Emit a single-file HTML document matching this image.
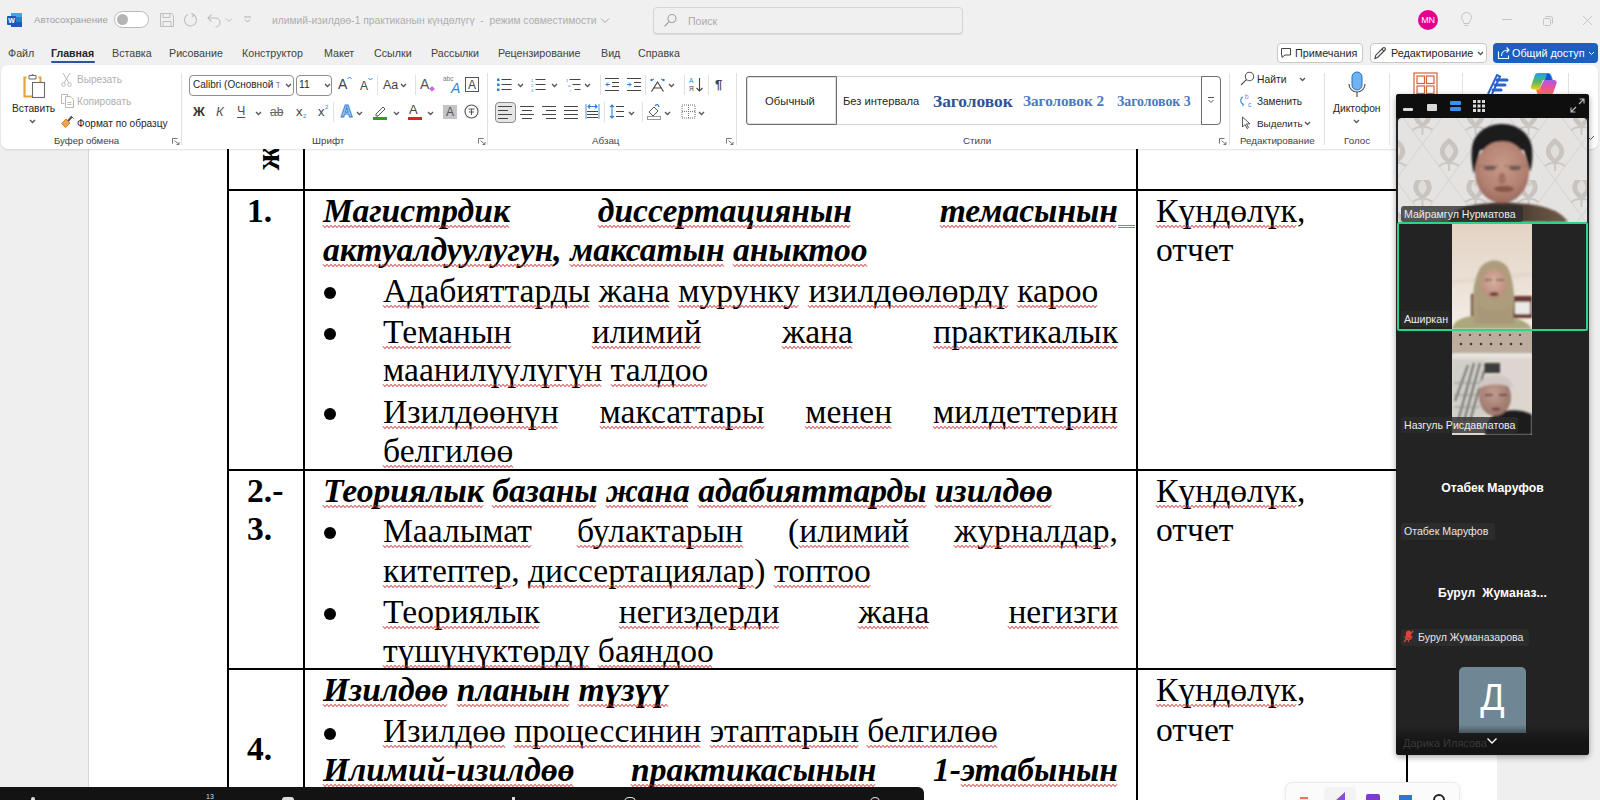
<!DOCTYPE html>
<html><head><meta charset="utf-8">
<style>
*{box-sizing:border-box;margin:0;padding:0}
html,body{width:1600px;height:800px;overflow:hidden;background:#f0f0f0;font-family:"Liberation Sans",sans-serif;position:relative}
.a{position:absolute}
.ui{font-family:"Liberation Sans",sans-serif;font-size:11px;color:#262626;white-space:nowrap}
.gr{color:#a8a8a8}
.tab{position:absolute;top:47px;font-size:10.5px;color:#424242;white-space:nowrap}
.sep{position:absolute;width:1px;background:#e1e1e1}
.glab{position:absolute;top:135px;font-size:10px;color:#424242;white-space:nowrap}
/* document */
.doc{font-family:"Liberation Serif",serif;font-size:33.6px;color:#000;white-space:nowrap;position:absolute;line-height:40px}
.bi{font-weight:bold;font-style:italic}
.j{text-align:justify;text-align-last:justify}
.w{}
.hl{position:absolute;background:#000;height:2px}
.vl{position:absolute;background:#000;width:2px}
.bul{position:absolute;width:12px;height:12px;border-radius:50%;background:#000}
</style></head><body>

<!-- ===== Title bar ===== -->
<div class="a" id="titlebar" style="left:0;top:0;width:1600px;height:40px;background:#f0f0f0"></div>


<!-- Word icon -->
<svg class="a" style="left:7px;top:12px" width="16" height="16" viewBox="0 0 16 16">
 <rect x="4" y="1" width="11" height="14" rx="1.5" fill="#2b6fd6"/>
 <rect x="4" y="1" width="11" height="4" fill="#41a5ee"/>
 <rect x="4" y="5" width="11" height="5" fill="#2b7cd3"/>
 <rect x="4" y="10" width="11" height="5" fill="#185abd"/>
 <rect x="0" y="4" width="9" height="9" rx="1" fill="#1e56b6"/>
 <text x="4.5" y="11.3" font-family="Liberation Sans" font-weight="bold" font-size="7" fill="#fff" text-anchor="middle">W</text>
</svg>
<div class="a ui" style="left:34px;top:14px;font-size:9.7px;color:#a0a0a0">Автосохранение</div>
<div class="a" style="left:114px;top:11px;width:35px;height:17px;border:1px solid #b9b9b9;border-radius:9px;background:#fff"></div>
<div class="a" style="left:117px;top:14px;width:11px;height:11px;border-radius:50%;background:#b5b5b5"></div>
<!-- save -->
<svg class="a" style="left:159px;top:12px" width="16" height="16" viewBox="0 0 16 16" fill="none" stroke="#bdbdbd" stroke-width="1">
 <path d="M1.5 1.5h11l2 2v11h-13z"/><path d="M4 1.5v4h7v-4"/><path d="M4 14.5v-5h8v5"/>
</svg>
<!-- redo circle -->
<svg class="a" style="left:183px;top:12px" width="16" height="16" viewBox="0 0 16 16" fill="none" stroke="#bdbdbd" stroke-width="1.1">
 <path d="M10.5 2.8A6 6 0 1 1 5 2.5"/><path d="M8.5 1.2 10.8 2.9 9 5"/>
</svg>
<!-- undo -->
<svg class="a" style="left:207px;top:12px" width="16" height="17" viewBox="0 0 16 17" fill="none" stroke="#bdbdbd" stroke-width="1.1">
 <path d="M1.5 6h7a4.5 4.5 0 0 1 0 9"/><path d="M4.5 2.5 1 6l3.5 3.5" transform="translate(0,0)"/>
</svg>
<svg class="a" style="left:225px;top:17px" width="8" height="6" viewBox="0 0 8 6" fill="none" stroke="#bdbdbd"><path d="M1 1.5 4 4.5 7 1.5"/></svg>
<svg class="a" style="left:243px;top:15px" width="9" height="9" viewBox="0 0 9 9" fill="none" stroke="#b0b0b0"><path d="M1 2h7M2 4.5l2.5 2.5 2.5-2.5"/></svg>
<div class="a ui" style="left:272px;top:15px;font-size:10.3px;color:#aeaeae">илимий-изилдөө-1 практиканын күндөлүгү &nbsp;- &nbsp;режим совместимости</div>
<svg class="a" style="left:600px;top:17px" width="10" height="7" viewBox="0 0 10 7" fill="none" stroke="#a6a6a6"><path d="M1 1.5 5 5.5 9 1.5"/></svg>
<!-- search -->
<div class="a" style="left:653px;top:7px;width:310px;height:27px;border:1px solid #d5d5d5;border-radius:4px;background:#f0f0f0;box-shadow:0 1px 0 #dcdcdc"></div>
<svg class="a" style="left:663px;top:13px" width="15" height="15" viewBox="0 0 15 15" fill="none" stroke="#a0a0a0" stroke-width="1.1"><circle cx="9" cy="5.5" r="4"/><path d="M6.2 8.5 1.5 13.3"/></svg>
<div class="a ui" style="left:688px;top:15px;font-size:10.5px;color:#acacac">Поиск</div>
<!-- avatar -->
<div class="a" style="left:1418px;top:10px;width:20px;height:20px;border-radius:50%;background:#e3008c;color:#fff;font-size:9px;line-height:20px;text-align:center;letter-spacing:-.3px">MN</div>
<svg class="a" style="left:1460px;top:12px" width="13" height="16" viewBox="0 0 13 16" fill="none" stroke="#c4c4c4" stroke-width="1"><path d="M4 11.5C4 9 1.5 8 1.5 5.5a5 5 0 0 1 10 0C11.5 8 9 9 9 11.5z"/><path d="M4.5 13.5h4"/></svg>
<div class="a" style="left:1502px;top:19px;width:10px;height:1px;background:#c4c4c4"></div>
<svg class="a" style="left:1542px;top:15px" width="11" height="11" viewBox="0 0 11 11" fill="none" stroke="#c4c4c4"><rect x="1.5" y="3.5" width="7" height="7" rx="1"/><path d="M3.5 1.5h5a2 2 0 0 1 2 2v5"/></svg>
<svg class="a" style="left:1582px;top:15px" width="11" height="11" viewBox="0 0 11 11" fill="none" stroke="#c4c4c4"><path d="M1 1l9 9M10 1 1 10"/></svg>

<!-- tabs -->
<div class="tab" style="left:8px;font-size:10.7px">Файл</div>
<div class="tab" style="left:51px;font-weight:bold;color:#262626;font-size:10.6px">Главная</div>
<div class="a" style="left:51px;top:61px;width:44px;height:2px;border-radius:1px;background:#2f5597"></div>
<div class="tab" style="left:112px;font-size:10.7px">Вставка</div>
<div class="tab" style="left:169px;font-size:10.7px">Рисование</div>
<div class="tab" style="left:242px;font-size:10.7px">Конструктор</div>
<div class="tab" style="left:324px;font-size:10.7px">Макет</div>
<div class="tab" style="left:374px;font-size:10.7px">Ссылки</div>
<div class="tab" style="left:431px;font-size:10.7px">Рассылки</div>
<div class="tab" style="left:498px;font-size:10.7px">Рецензирование</div>
<div class="tab" style="left:601px;font-size:10.7px">Вид</div>
<div class="tab" style="left:638px;font-size:10.7px">Справка</div>

<!-- right buttons -->
<div class="a" style="left:1277px;top:43px;width:86px;height:20px;border:1px solid #c8c8c8;border-radius:4px;background:#fff"></div>
<svg class="a" style="left:1280px;top:47px" width="12" height="12" viewBox="0 0 12 12" fill="none" stroke="#444" stroke-width="1"><path d="M1.5 1.5h9v6.5h-5.5l-3 2.5v-2.5h-.5z"/></svg>
<div class="a ui" style="left:1295px;top:47px;font-size:10.8px;color:#262626">Примечания</div>
<div class="a" style="left:1370px;top:43px;width:117px;height:20px;border:1px solid #c8c8c8;border-radius:4px;background:#fff"></div>
<svg class="a" style="left:1373px;top:46px" width="14" height="14" viewBox="0 0 14 14" fill="none" stroke="#444" stroke-width="1.1"><path d="M2 12.5l.8-3.3L10 2a1.4 1.4 0 0 1 2 2L4.8 11.2z"/><path d="M8.8 3.2l2 2"/></svg>
<div class="a ui" style="left:1391px;top:47px;font-size:10.8px;color:#262626">Редактирование</div>
<svg class="a" style="left:1477px;top:51px" width="7" height="5" viewBox="0 0 7 5" fill="none" stroke="#555" stroke-width="1.3"><path d="M1 1l2.5 2.5L6 1"/></svg>
<div class="a" style="left:1493px;top:43px;width:105px;height:20px;border-radius:4px;background:#1b5fc1"></div>
<svg class="a" style="left:1497px;top:46px" width="14" height="14" viewBox="0 0 14 14" fill="none" stroke="#fff" stroke-width="1.1"><path d="M1.5 5.5v7h10v-3"/><path d="M4.5 10c0-4 3-6 7-6M9.5 1.5 12 4 9.5 6.5"/></svg>
<div class="a ui" style="left:1512px;top:47px;font-size:10.8px;color:#fff">Общий доступ</div>
<svg class="a" style="left:1588px;top:51px" width="7" height="5" viewBox="0 0 7 5" fill="none" stroke="#fff"><path d="M1 1l2.5 2.5L6 1"/></svg>

<!-- ===== Document canvas ===== -->
<div class="a" style="left:0;top:149px;width:1600px;height:651px;background:#efefef"></div>
<div class="a" style="left:88px;top:140px;width:1409px;height:660px;background:#fff;border-left:1px solid #d6d6d6"></div>


<!-- ===== Table ===== -->
<div class="vl" style="left:227px;top:149px;height:651px"></div>
<div class="vl" style="left:303px;top:149px;height:651px"></div>
<div class="vl" style="left:1136px;top:149px;height:651px"></div>
<div class="vl" style="left:1406px;top:149px;height:651px"></div>
<div class="hl" style="left:227px;top:189px;width:1181px"></div>
<div class="hl" style="left:227px;top:469px;width:1181px"></div>
<div class="hl" style="left:227px;top:668px;width:1181px"></div>

<div class="doc" style="left:253px;top:143px;font-weight:bold;transform:rotate(-90deg);line-height:30px;width:30px;height:30px;text-align:center">ж</div>

<!-- row 1 -->
<div class="a" style="left:1118px;top:225px;width:17px;height:3px;border-top:1px solid #5b8fd8;border-bottom:1px solid #5b8fd8"></div>
<div class="doc" style="left:247px;top:191px;font-weight:bold">1.</div>
<div class="doc bi j" style="left:323px;top:191px;width:795px"><span class="w">Магистрдик</span> <span class="w">диссертациянын</span> <span class="w">темасынын</span></div>
<div class="doc bi" style="left:323px;top:230px"><span class="w">актуалдуулугун</span>, <span class="w">максатын</span> <span class="w">аныктоо</span></div>
<div class="bul" style="left:324px;top:287px"></div>
<div class="doc" style="left:383px;top:271px"><span class="w">Адабияттарды</span> <span class="w">жана</span> <span class="w">мурунку</span> <span class="w">изилдөөлөрдү</span> <span class="w">кароо</span></div>
<div class="bul" style="left:324px;top:328px"></div>
<div class="doc j" style="left:383px;top:312px;width:735px"><span class="w">Теманын</span> <span class="w">илимий</span> <span class="w">жана</span> <span class="w">практикалык</span></div>
<div class="doc" style="left:383px;top:350px"><span class="w">маанилүүлүгүн</span> <span class="w">талдоо</span></div>
<div class="bul" style="left:324px;top:408px"></div>
<div class="doc j" style="left:383px;top:392px;width:735px"><span class="w">Изилдөөнүн</span> <span class="w">максаттары</span> <span class="w">менен</span> <span class="w">милдеттерин</span></div>
<div class="doc" style="left:383px;top:431px"><span class="w">белгилөө</span></div>
<div class="doc" style="left:1156px;top:191px"><span class="w">Күндөлүк</span>,</div>
<div class="doc" style="left:1156px;top:230px">отчет</div>

<!-- row 2 -->
<div class="doc" style="left:247px;top:471px;font-weight:bold">2.-</div>
<div class="doc" style="left:247px;top:509px;font-weight:bold">3.</div>
<div class="doc bi" style="left:323px;top:471px"><span class="w">Теориялык</span> <span class="w">базаны</span> <span class="w">жана</span> <span class="w">адабияттарды</span> <span class="w">изилдөө</span></div>
<div class="bul" style="left:324px;top:527px"></div>
<div class="doc j" style="left:383px;top:511px;width:735px"><span class="w">Маалымат</span> <span class="w">булактарын</span> (<span class="w">илимий</span> <span class="w">журналдар</span>,</div>
<div class="doc" style="left:383px;top:551px"><span class="w">китептер</span>, <span class="w">диссертациялар</span>) <span class="w">топтоо</span></div>
<div class="bul" style="left:324px;top:608px"></div>
<div class="doc j" style="left:383px;top:592px;width:735px"><span class="w">Теориялык</span> <span class="w">негиздерди</span> <span class="w">жана</span> <span class="w">негизги</span></div>
<div class="doc" style="left:383px;top:631px"><span class="w">түшүнүктөрдү</span> <span class="w">баяндоо</span></div>
<div class="doc" style="left:1156px;top:471px"><span class="w">Күндөлүк</span>,</div>
<div class="doc" style="left:1156px;top:510px">отчет</div>

<!-- row 3 -->
<div class="doc bi" style="left:323px;top:670px"><span class="w">Изилдөө</span> <span class="w">планын</span> <span class="w">түзүү</span></div>
<div class="bul" style="left:324px;top:728px"></div>
<div class="doc" style="left:383px;top:711px"><span class="w">Изилдөө</span> <span class="w">процессинин</span> <span class="w">этаптарын</span> <span class="w">белгилөө</span></div>
<div class="doc bi j" style="left:323px;top:750px;width:795px"><span class="w">Илимий-изилдөө</span> <span class="w">практикасынын</span> 1-<span class="w">этабынын</span></div>
<div class="doc" style="left:247px;top:729px;font-weight:bold">4.</div>
<div class="doc" style="left:1156px;top:670px"><span class="w">Күндөлүк</span>,</div>
<div class="doc" style="left:1156px;top:710px">отчет</div>

<!-- ===== Ribbon card ===== -->
<div class="a" style="left:1px;top:65px;width:1597px;height:84px;background:#fff;border-radius:7px;box-shadow:0 1px 2px rgba(0,0,0,.12)"></div>


<!-- clipboard group -->
<svg class="a" style="left:22px;top:72px" width="26" height="27" viewBox="0 0 26 27" fill="none">
 <path d="M4.5 5.5h-2v19h8" stroke="#e8a33d" stroke-width="2.2"/>
 <path d="M16.5 5.5h2v5" stroke="#e8a33d" stroke-width="2"/>
 <path d="M7 3.5h7v3.5H7z" stroke="#6b6b6b" stroke-width="1" fill="#fff"/>
 <path d="M9.5 3.5a1 1 0 0 1 2 0" stroke="#6b6b6b"/>
 <rect x="10.5" y="10.5" width="12" height="15" fill="#fff" stroke="#6b6b6b" stroke-width="1.1"/>
</svg>
<div class="a ui" style="left:12px;top:103px;font-size:10.2px">Вставить</div>
<svg class="a" style="left:29px;top:119px" width="7" height="5" viewBox="0 0 7 5" fill="none" stroke="#555" stroke-width="1.3"><path d="M1 1l2.5 2.5L6 1"/></svg>
<svg class="a" style="left:61px;top:72px" width="11" height="15" viewBox="0 0 11 15" fill="none" stroke="#b8b8b8" stroke-width="1"><path d="M2 1l6 10M9 1 3 11"/><circle cx="2.5" cy="12.5" r="1.8"/><circle cx="8.5" cy="12.5" r="1.8"/></svg>
<div class="a ui gr" style="left:77px;top:74px;font-size:10.1px;color:#b0b0b0">Вырезать</div>
<svg class="a" style="left:60px;top:93px" width="15" height="15" viewBox="0 0 15 15" fill="none" stroke="#b8b8b8" stroke-width="1"><path d="M4.5 10.5h-3v-9h6v2"/><path d="M5.5 3.5h5l3 3v8h-8z"/><path d="M7.5 9.5h4M7.5 11.5h4"/></svg>
<div class="a ui gr" style="left:77px;top:96px;font-size:10.1px;color:#b0b0b0">Копировать</div>
<svg class="a" style="left:60px;top:115px" width="15" height="14" viewBox="0 0 15 14" fill="none"><path d="M1.5 8.5 6 4l4 4-4.5 4.5z" fill="#f2a34b" stroke="#d9822b"/><path d="M8 6l4-4.5" stroke="#555" stroke-width="2"/><path d="M11 1l2.5 2.5" stroke="#555" stroke-width="1"/></svg>
<div class="a ui" style="left:77px;top:118px;font-size:10.1px">Формат по образцу</div>
<div class="glab" style="left:54px;font-size:9.6px">Буфер обмена</div>
<svg class="a" style="left:172px;top:138px" width="8" height="7" viewBox="0 0 8 7" fill="none" stroke="#666" stroke-width=".9"><path d="M.5 5.5v-5h5M2.5 2.5l4.5 4M4.5 6.5h2.5V4"/></svg>
<div class="sep" style="left:181px;top:73px;height:72px"></div>

<!-- font group -->
<div class="a" style="left:189px;top:75px;width:105px;height:21px;border:1px solid #8f8f8f;border-radius:4px;background:#fff;overflow:hidden">
 <div class="ui" style="position:absolute;left:3px;top:3px;font-size:10px;width:89px;overflow:hidden">Calibri (Основной те</div>
 <div style="position:absolute;left:85px;top:0;width:7px;height:19px;background:linear-gradient(90deg,rgba(255,255,255,0),#fff)"></div>
</div>
<svg class="a" style="left:285px;top:83px" width="7" height="5" viewBox="0 0 7 5" fill="none" stroke="#555" stroke-width="1.3"><path d="M1 1l2.5 2.5L6 1"/></svg>
<div class="a" style="left:296px;top:75px;width:36px;height:21px;border:1px solid #8f8f8f;border-radius:4px;background:#fff"></div>
<div class="a ui" style="left:299px;top:79px;font-size:10.3px">11</div>
<svg class="a" style="left:324px;top:83px" width="7" height="5" viewBox="0 0 7 5" fill="none" stroke="#555" stroke-width="1.3"><path d="M1 1l2.5 2.5L6 1"/></svg>
<div class="a ui" style="left:338px;top:76px;font-size:14px;color:#444">A</div><svg class="a" style="left:347px;top:76px" width="5" height="4" viewBox="0 0 5 4" fill="none" stroke="#3a7dd8"><path d="M.5 3 2.5 1 4.5 3"/></svg>
<div class="a ui" style="left:360px;top:79px;font-size:12px;color:#444">A</div><svg class="a" style="left:368px;top:77px" width="5" height="4" viewBox="0 0 5 4" fill="none" stroke="#3a7dd8"><path d="M.5 1 2.5 3 4.5 1"/></svg>
<div class="sep" style="left:377px;top:75px;height:20px"></div>
<div class="a ui" style="left:383px;top:78px;font-size:12.5px;color:#444">Aa</div>
<svg class="a" style="left:400px;top:83px" width="7" height="5" viewBox="0 0 7 5" fill="none" stroke="#555" stroke-width="1.3"><path d="M1 1l2.5 2.5L6 1"/></svg>
<div class="sep" style="left:415px;top:75px;height:20px"></div>
<div class="a ui" style="left:420px;top:76px;font-size:14px;color:#555">A</div><svg class="a" style="left:428px;top:84px" width="8" height="8" viewBox="0 0 8 8"><path d="M1 5l3-3 3 3-3 2.5z" fill="#c86dd7"/></svg>
<div class="a ui" style="left:443px;top:75px;font-size:6.5px;color:#777">abc</div><div class="a ui" style="left:451px;top:80px;font-size:14px;color:#2f88e0;font-style:italic">A</div>
<div class="a" style="left:465px;top:77px;width:14px;height:15px;border:1px solid #555"></div><div class="a ui" style="left:468px;top:78px;font-size:12px;color:#444">A</div>

<div class="a ui" style="left:193px;top:104px;font-size:13px;font-weight:bold;color:#333">Ж</div>
<div class="a ui" style="left:216px;top:104px;font-size:13px;font-style:italic;color:#555">К</div>
<div class="a ui" style="left:237px;top:104px;font-size:12.5px;color:#555;text-decoration:underline;text-underline-offset:2px">Ч</div>
<svg class="a" style="left:255px;top:111px" width="7" height="5" viewBox="0 0 7 5" fill="none" stroke="#555" stroke-width="1.3"><path d="M1 1l2.5 2.5L6 1"/></svg>
<div class="a ui" style="left:270px;top:105px;font-size:12px;color:#666;text-decoration:line-through">ab</div>
<div class="a ui" style="left:296px;top:104px;font-size:13px;color:#444">x</div><div class="a ui" style="left:303px;top:113px;font-size:6px;color:#3a7dd8">2</div>
<div class="a ui" style="left:318px;top:104px;font-size:13px;color:#444">x</div><div class="a ui" style="left:325px;top:104px;font-size:6px;color:#3a7dd8">2</div>
<div class="sep" style="left:333px;top:102px;height:20px"></div>
<svg class="a" style="left:339px;top:103px" width="15" height="16" viewBox="0 0 15 16"><text x="7.5" y="14" text-anchor="middle" font-family="Liberation Sans" font-weight="bold" font-size="16" fill="#cfe6fb" stroke="#3a86d6" stroke-width="1.2">A</text></svg>
<svg class="a" style="left:356px;top:111px" width="7" height="5" viewBox="0 0 7 5" fill="none" stroke="#555" stroke-width="1.3"><path d="M1 1l2.5 2.5L6 1"/></svg>
<svg class="a" style="left:373px;top:104px" width="15" height="16" viewBox="0 0 15 16" fill="none"><path d="M3 10l7-7 2 2-7 7H3z" stroke="#555" stroke-width="1"/><rect x="0" y="13" width="14" height="3" fill="#2a9d2a"/></svg>
<svg class="a" style="left:393px;top:111px" width="7" height="5" viewBox="0 0 7 5" fill="none" stroke="#555" stroke-width="1.3"><path d="M1 1l2.5 2.5L6 1"/></svg>
<div class="a ui" style="left:409px;top:102px;font-size:13px;color:#444">A</div><div class="a" style="left:408px;top:117px;width:14px;height:3px;background:#e02020"></div>
<svg class="a" style="left:427px;top:111px" width="7" height="5" viewBox="0 0 7 5" fill="none" stroke="#555" stroke-width="1.3"><path d="M1 1l2.5 2.5L6 1"/></svg>
<div class="a" style="left:443px;top:105px;width:14px;height:14px;background:#c4c4c4"></div><div class="a ui" style="left:446px;top:105px;font-size:12px;color:#555">A</div>
<svg class="a" style="left:464px;top:104px" width="15" height="15" viewBox="0 0 15 15" fill="none" stroke="#555" stroke-width="1.1"><circle cx="7.5" cy="7.5" r="6.5"/><path d="M4.5 5h6M7.5 5v6M5 8h5"/></svg>
<div class="glab" style="left:312px;font-size:9.8px">Шрифт</div>
<svg class="a" style="left:478px;top:138px" width="8" height="7" viewBox="0 0 8 7" fill="none" stroke="#666" stroke-width=".9"><path d="M.5 5.5v-5h5M2.5 2.5l4.5 4M4.5 6.5h2.5V4"/></svg>
<div class="sep" style="left:487px;top:73px;height:72px"></div>

<!-- paragraph group -->
<svg class="a" style="left:497px;top:78px" width="15" height="14" viewBox="0 0 15 14"><g fill="#2d7fd3"><rect x="0" y="0.5" width="2.5" height="2.5"/><rect x="0" y="5.5" width="2.5" height="2.5"/><rect x="0" y="10.5" width="2.5" height="2.5"/></g><g stroke="#444" stroke-width="1"><path d="M4.5 1.5h10M4.5 6.5h10M4.5 11.5h10"/></g></svg>
<svg class="a" style="left:517px;top:83px" width="7" height="5" viewBox="0 0 7 5" fill="none" stroke="#555" stroke-width="1.3"><path d="M1 1l2.5 2.5L6 1"/></svg>
<svg class="a" style="left:531px;top:78px" width="15" height="14" viewBox="0 0 15 14"><g fill="#2d7fd3" font-size="4" font-family="Liberation Sans"><text x="0" y="3.5">1</text><text x="0" y="8.5">2</text><text x="0" y="13.5">3</text></g><g stroke="#444" stroke-width="1"><path d="M4.5 1.5h10M4.5 6.5h10M4.5 11.5h10"/></g></svg>
<svg class="a" style="left:551px;top:83px" width="7" height="5" viewBox="0 0 7 5" fill="none" stroke="#555" stroke-width="1.3"><path d="M1 1l2.5 2.5L6 1"/></svg>
<svg class="a" style="left:566px;top:78px" width="15" height="14" viewBox="0 0 15 14"><g fill="#2d7fd3" font-size="4" font-family="Liberation Sans"><text x="0" y="3.5">1</text><text x="2" y="8.5">a</text><text x="4" y="13.5">i</text></g><g stroke="#444" stroke-width="1"><path d="M3.5 1.5h11M6.5 6.5h8M8.5 11.5h6"/></g></svg>
<svg class="a" style="left:584px;top:83px" width="7" height="5" viewBox="0 0 7 5" fill="none" stroke="#555" stroke-width="1.3"><path d="M1 1l2.5 2.5L6 1"/></svg>
<div class="sep" style="left:600px;top:75px;height:20px"></div>
<svg class="a" style="left:605px;top:78px" width="14" height="13" viewBox="0 0 14 13" stroke-width="1"><g stroke="#444"><path d="M0 .5h14M7 4.5h7M7 8.5h7M0 12.5h14"/></g><path d="M5 6.5H1M3 4.5l-2 2 2 2" stroke="#2d7fd3" fill="none"/></svg>
<svg class="a" style="left:627px;top:78px" width="14" height="13" viewBox="0 0 14 13" stroke-width="1"><g stroke="#444"><path d="M0 .5h14M7 4.5h7M7 8.5h7M0 12.5h14"/></g><path d="M0 6.5h4M2 4.5l2 2-2 2" stroke="#2d7fd3" fill="none"/></svg>
<div class="sep" style="left:645px;top:75px;height:20px"></div>
<svg class="a" style="left:650px;top:78px" width="15" height="14" viewBox="0 0 15 14" fill="none"><path d="M1.5 13.5 7.5 4l6 9.5M4 10h7" stroke="#444" stroke-width="1.2"/><path d="M1 2.5 4 1M14 2.5 11 1" stroke="#2d7fd3"/><circle cx="1.5" cy="2" r="1.2" fill="#2d7fd3"/><circle cx="13.5" cy="2" r="1.2" fill="#2d7fd3"/></svg>
<svg class="a" style="left:668px;top:83px" width="7" height="5" viewBox="0 0 7 5" fill="none" stroke="#555" stroke-width="1.3"><path d="M1 1l2.5 2.5L6 1"/></svg>
<div class="sep" style="left:684px;top:75px;height:20px"></div>
<svg class="a" style="left:689px;top:77px" width="15" height="15" viewBox="0 0 15 15" fill="none"><text x="0" y="6" font-size="6.5" font-family="Liberation Sans" fill="#2d7fd3">A</text><text x="0" y="14" font-size="6.5" font-family="Liberation Sans" fill="#444">Я</text><path d="M10.5 1v13M7.5 11l3 3 3-3" stroke="#444" stroke-width="1.1"/></svg>
<div class="sep" style="left:708px;top:75px;height:20px"></div>
<div class="a ui" style="left:715px;top:77px;font-size:13px;font-weight:bold;color:#444">¶</div>

<div class="a" style="left:495px;top:102px;width:21px;height:21px;border:1px solid #8d8d8d;border-radius:4px;background:#e6e6e6"></div>
<svg class="a" style="left:498px;top:106px" width="14" height="13" viewBox="0 0 14 13" stroke="#444" stroke-width="1.1"><path d="M0 .5h14M0 4.5h10M0 8.5h14M0 12.5h10"/></svg>
<svg class="a" style="left:520px;top:106px" width="14" height="13" viewBox="0 0 14 13" stroke="#444" stroke-width="1.1"><path d="M0 .5h14M2 4.5h10M0 8.5h14M2 12.5h10"/></svg>
<svg class="a" style="left:542px;top:106px" width="14" height="13" viewBox="0 0 14 13" stroke="#444" stroke-width="1.1"><path d="M0 .5h14M4 4.5h10M0 8.5h14M4 12.5h10"/></svg>
<svg class="a" style="left:564px;top:106px" width="14" height="13" viewBox="0 0 14 13" stroke="#444" stroke-width="1.1"><path d="M0 .5h14M0 4.5h14M0 8.5h14M0 12.5h14"/></svg>
<svg class="a" style="left:585px;top:104px" width="15" height="15" viewBox="0 0 15 15" stroke-width="1.1" fill="none"><path d="M1 0v15M14 0v15" stroke="#5aa0e0"/><path d="M3 2.5h9M5 .5l-2 2 2 2M10 .5l2 2-2 2" stroke="#2d7fd3"/><path d="M2 7.5h11M2 10.5h11M2 13.5h11" stroke="#444"/></svg>
<div class="sep" style="left:604px;top:102px;height:20px"></div>
<svg class="a" style="left:609px;top:104px" width="15" height="15" viewBox="0 0 15 15" fill="none" stroke-width="1.1"><path d="M3 1v13M1 3l2-2 2 2M1 12l2 2 2-2" stroke="#2d7fd3"/><path d="M7 2.5h8M7 7.5h8M7 12.5h8" stroke="#444"/></svg>
<svg class="a" style="left:628px;top:111px" width="7" height="5" viewBox="0 0 7 5" fill="none" stroke="#555" stroke-width="1.3"><path d="M1 1l2.5 2.5L6 1"/></svg>
<div class="sep" style="left:642px;top:102px;height:20px"></div>
<svg class="a" style="left:647px;top:103px" width="15" height="17" viewBox="0 0 15 17" fill="none"><path d="M2 9l5-5 4 4-5 5z" stroke="#555"/><path d="M8 3c1-2 4-2 4 1" stroke="#2d7fd3" stroke-width="1.2"/><rect x="0.5" y="13.5" width="13" height="3" stroke="#999" fill="#fff"/></svg>
<svg class="a" style="left:664px;top:111px" width="7" height="5" viewBox="0 0 7 5" fill="none" stroke="#555" stroke-width="1.3"><path d="M1 1l2.5 2.5L6 1"/></svg>
<svg class="a" style="left:681px;top:104px" width="15" height="15" viewBox="0 0 15 15" fill="none" stroke="#777" stroke-dasharray="1 1"><rect x="1" y="1" width="13" height="13"/><path d="M7.5 1v13M1 7.5h13"/></svg>
<svg class="a" style="left:698px;top:111px" width="7" height="5" viewBox="0 0 7 5" fill="none" stroke="#555" stroke-width="1.3"><path d="M1 1l2.5 2.5L6 1"/></svg>
<div class="glab" style="left:592px;font-size:9.8px">Абзац</div>
<svg class="a" style="left:726px;top:138px" width="8" height="7" viewBox="0 0 8 7" fill="none" stroke="#666" stroke-width=".9"><path d="M.5 5.5v-5h5M2.5 2.5l4.5 4M4.5 6.5h2.5V4"/></svg>
<div class="sep" style="left:736px;top:73px;height:72px"></div>

<!-- styles group -->
<div class="a" style="left:746px;top:76px;width:475px;height:49px;border:1px solid #d4d4d4;border-radius:4px;background:#fff"></div>
<div class="a" style="left:746px;top:76px;width:91px;height:49px;border:1px solid #6f6f6f;border-radius:3px 0 0 3px;box-shadow:inset 0 0 0 1px #e0e0e0"></div>
<div class="a ui" style="left:765px;top:95px;font-size:11.3px">Обычный</div>
<div class="a ui" style="left:843px;top:95px;font-size:11.2px">Без интервала</div>
<div class="a" style="left:933px;top:91px;font-family:'Liberation Serif',serif;font-weight:bold;font-size:17.4px;color:#2e5395;white-space:nowrap">Заголовок</div>
<div class="a" style="left:1023px;top:92px;width:81px;overflow:hidden;font-family:'Liberation Serif',serif;font-weight:bold;font-size:15.2px;color:#4a79c0;white-space:nowrap">Заголовок 2</div>
<div class="a" style="left:1117px;top:94px;font-family:'Liberation Serif',serif;font-weight:bold;font-size:13.8px;color:#4a79c0;white-space:nowrap">Заголовок 3</div>
<div class="a" style="left:1201px;top:76px;width:20px;height:49px;border:1px solid #6f6f6f;border-radius:0 4px 4px 0;background:#fff"></div>
<svg class="a" style="left:1207px;top:96px" width="8" height="8" viewBox="0 0 8 8" fill="none" stroke="#555"><path d="M1 1.5h6M1.5 4l2.5 2.5L6.5 4"/></svg>
<div class="glab" style="left:963px;font-size:9.8px">Стили</div>
<svg class="a" style="left:1219px;top:138px" width="8" height="7" viewBox="0 0 8 7" fill="none" stroke="#666" stroke-width=".9"><path d="M.5 5.5v-5h5M2.5 2.5l4.5 4M4.5 6.5h2.5V4"/></svg>
<div class="sep" style="left:1229px;top:73px;height:72px"></div>

<!-- editing group -->
<svg class="a" style="left:1240px;top:71px" width="15" height="15" viewBox="0 0 15 15" fill="none" stroke="#555" stroke-width="1.1"><circle cx="9.5" cy="5.5" r="4.2"/><path d="M6.5 8.5 1 14"/></svg>
<div class="a ui" style="left:1257px;top:74px;font-size:10.3px">Найти</div>
<svg class="a" style="left:1299px;top:77px" width="7" height="5" viewBox="0 0 7 5" fill="none" stroke="#555" stroke-width="1.3"><path d="M1 1l2.5 2.5L6 1"/></svg>
<svg class="a" style="left:1239px;top:93px" width="14" height="15" viewBox="0 0 14 15" fill="none"><text x="6" y="6" font-size="6.5" font-family="Liberation Sans" fill="#b36ad0">b</text><text x="9" y="14" font-size="6.5" font-family="Liberation Sans" fill="#2d8ee0">c</text><path d="M4 4c-3 1-3 6 0 7M2.5 10l2 1.5-1 1.5" stroke="#2d8ee0" stroke-width="1.1"/></svg>
<div class="a ui" style="left:1257px;top:96px;font-size:10px">Заменить</div>
<svg class="a" style="left:1241px;top:116px" width="11" height="14" viewBox="0 0 11 14" fill="none" stroke="#555" stroke-width="1"><path d="M1.5 1v10l2.5-2.5 2 4 1.5-.8-2-3.8h3.5z"/></svg>
<div class="a ui" style="left:1257px;top:118px;font-size:9.9px">Выделить</div>
<svg class="a" style="left:1304px;top:121px" width="7" height="5" viewBox="0 0 7 5" fill="none" stroke="#555" stroke-width="1.3"><path d="M1 1l2.5 2.5L6 1"/></svg>
<div class="glab" style="left:1240px;font-size:9.8px">Редактирование</div>
<div class="sep" style="left:1324px;top:73px;height:72px"></div>
<svg class="a" style="left:1347px;top:71px" width="20" height="28" viewBox="0 0 20 28" fill="none"><rect x="5" y="1" width="10" height="18" rx="5" fill="#6fb3f0" stroke="#2c6fb6" stroke-width="1"/><path d="M2 13a8 8 0 0 0 16 0M10 21v5" stroke="#555" stroke-width="1.2"/></svg>
<div class="a ui" style="left:1333px;top:103px;font-size:10.3px">Диктофон</div>
<svg class="a" style="left:1353px;top:119px" width="7" height="5" viewBox="0 0 7 5" fill="none" stroke="#555" stroke-width="1.3"><path d="M1 1l2.5 2.5L6 1"/></svg>
<div class="glab" style="left:1344px;font-size:9.8px">Голос</div>
<div class="sep" style="left:1389px;top:73px;height:72px"></div>
<!-- designer / editor / copilot (partly hidden) -->
<svg class="a" style="left:1413px;top:72px" width="26" height="24" viewBox="0 0 26 24" fill="none" stroke="#d0663a" stroke-width="1.2"><rect x="1" y="1" width="23" height="23"/><rect x="4" y="4" width="7.5" height="7.5"/><rect x="13.5" y="4" width="7.5" height="7.5"/><rect x="4" y="14" width="7.5" height="7.5"/><rect x="13.5" y="14" width="7.5" height="7.5"/></svg>
<div class="sep" style="left:1462px;top:73px;height:72px"></div>
<svg class="a" style="left:1484px;top:72px" width="26" height="23" viewBox="0 0 26 23" fill="none"><path d="M4 22 13 3l3 1.5L8 22" stroke="#2a62c9" stroke-width="2"/><path d="M13 8h10M11 13h10M9 18h8" stroke="#2a62c9" stroke-width="3" stroke-linecap="round"/></svg>
<svg class="a" style="left:1530px;top:72px" width="28" height="24" viewBox="0 0 28 24"><defs><linearGradient id="cp1" x1="0" y1="0" x2="0" y2="1"><stop offset="0" stop-color="#1ea0f0"/><stop offset=".55" stop-color="#5cb85c"/><stop offset="1" stop-color="#ecd11a"/></linearGradient><linearGradient id="cp2" x1="0" y1="0" x2="0" y2="1"><stop offset="0" stop-color="#a35ee8"/><stop offset=".5" stop-color="#ec4f9a"/><stop offset="1" stop-color="#f8785a"/></linearGradient><filter id="cpb"><feGaussianBlur stdDeviation=".4"/></filter></defs><g filter="url(#cpb)"><path d="M8 1h10c2 0 3 1 3.6 3l1.4 4H13l-3.5 9.5H3.5C1.5 17.5.5 16.5 1 14.5L4.5 4C5 2 6 1 8 1z" fill="url(#cp1)"/><path d="M17 1.5c2 0 3 .8 3.6 2.5L22 8h-7z" fill="#1f4fd8"/><path d="M14 8h10c2 0 3 1.5 2.5 3.5L23.5 20c-.5 2-1.5 3-3.5 3H9.5c-1.5 0-2-1-1.5-2.5z" fill="url(#cp2)"/><path d="M6 17.5h5.5L10 22c-1 .5-2 .5-2.5 0z" fill="#f47a3a"/></g></svg>
<div class="sep" style="left:1568px;top:73px;height:72px"></div>
<svg class="a" style="left:1586px;top:135px" width="9" height="6" viewBox="0 0 9 6" fill="none" stroke="#555"><path d="M1 1l3.5 3.5L8 1"/></svg>


<!-- ===== Zoom panel ===== -->
<div class="a" style="left:1396px;top:94px;width:193px;height:661px;background:#232323;border-radius:3px;box-shadow:0 2px 6px rgba(0,0,0,.35);overflow:hidden">
 <div class="a" style="left:0;top:0;width:193px;height:24px;background:#0e0e0e"></div>
</div>
<div class="a" style="left:1403px;top:108px;width:10px;height:3px;background:#d9d9d9;border-radius:1px"></div>
<div class="a" style="left:1427px;top:104px;width:10px;height:7px;background:#d9d9d9;border-radius:1px"></div>
<div class="a" style="left:1450px;top:101px;width:11px;height:4px;background:#3a8ff0;border-radius:1px"></div>
<div class="a" style="left:1450px;top:107px;width:11px;height:4px;background:#3a8ff0;border-radius:1px"></div>
<svg class="a" style="left:1473px;top:100px" width="12" height="12" viewBox="0 0 12 12" fill="#d9d9d9"><rect x="0" y="0" width="3" height="3"/><rect x="4.5" y="0" width="3" height="3"/><rect x="9" y="0" width="3" height="3"/><rect x="0" y="4.5" width="3" height="3"/><rect x="4.5" y="4.5" width="3" height="3"/><rect x="9" y="4.5" width="3" height="3"/><rect x="0" y="9" width="3" height="3"/><rect x="4.5" y="9" width="3" height="3"/><rect x="9" y="9" width="3" height="3"/></svg>
<svg class="a" style="left:1570px;top:98px" width="15" height="15" viewBox="0 0 15 15" fill="none" stroke="#bdbdbd" stroke-width="1.1"><path d="M9 6 14 1M9.5 1h4.5v4.5M6 9 1 14M1 9.5V14h4.5"/></svg>

<!-- tile 1 -->
<svg class="a" style="left:1398px;top:118px;border-radius:4px 4px 0 0" width="189" height="104" viewBox="0 0 189 104">
 <defs><filter id="bl1"><feGaussianBlur stdDeviation="1.2"/></filter>
 <g id="mot"><path d="M0-14c5 4 10 8 9 15c-1 6-6 8-9 12c-3-4-8-6-9-12c-1-7 4-11 9-15z" fill="#c9c4bf"/><path d="M0-8c3 3 5 5 4 9c-1 3-3 4-4 6c-1-2-3-3-4-6c-1-4 1-6 4-9z" fill="#e0dedb"/><path d="M-10 14c4-3 7-4 10-2c3-2 6-1 10 2" stroke="#cdc8c3" stroke-width="2" fill="none"/><path d="M0 13v6" stroke="#cdc8c3" stroke-width="2"/></g>
 <pattern id="dam" x="-2" y="-10" width="53" height="72" patternUnits="userSpaceOnUse">
  <rect width="53" height="72" fill="#e4e3e2"/>
  <path d="M0 0C10 14 16 22 26.5 36C37 50 43 58 53 72M53 0C43 14 37 22 26.5 36C16 50 10 58 0 72" stroke="#d9d6d3" stroke-width="1.2" fill="none"/>
  <use href="#mot" x="26.5" y="8"/><use href="#mot" x="0" y="44"/><use href="#mot" x="53" y="44"/>
 </pattern>
 <radialGradient id="sk1" cx=".5" cy=".4" r=".6"><stop offset="0" stop-color="#c89a88"/><stop offset=".7" stop-color="#b38172"/><stop offset="1" stop-color="#9a6a5e"/></radialGradient>
 <linearGradient id="sw1" x1="0" y1="0" x2="1" y2="0"><stop offset="0" stop-color="#3b2f28"/><stop offset=".5" stop-color="#3f322a"/><stop offset=".75" stop-color="#5e4b3c"/><stop offset="1" stop-color="#6e5a48"/></linearGradient>
 </defs>
 <filter id="bl0"><feGaussianBlur stdDeviation=".7"/></filter><rect width="189" height="104" fill="url(#dam)" filter="url(#bl0)"/>
 <g filter="url(#bl1)">
  <path d="M50 104c2-10 14-16 32-18l22-2 26 2c18 2 34 8 40 18z" fill="url(#sw1)"/>
  <path d="M74 30c2-16 16-24 30-24s28 8 30 24c1 10 0 18-2 24l-6-22H82l-6 24c-2-8-3-16-2-26z" fill="#1c1b1f"/>
  <ellipse cx="104" cy="54" rx="27" ry="31" fill="url(#sk1)"/>
  <path d="M77 36c4-16 50-18 54 0c-2-18-14-26-27-26s-25 8-27 26z" fill="#1c1b1f"/>
  <path d="M80 48h21M106 48h23" stroke="#9a7a6c" stroke-width="1.5"/>
  <ellipse cx="92" cy="50" rx="6" ry="2.3" fill="#6d5a55"/><ellipse cx="117" cy="50" rx="6" ry="2.3" fill="#6d5a55"/>
  <path d="M102 55c-2 6-3 10 2 11c5-1 4-5 2-11" fill="#a56e60"/>
  <ellipse cx="106" cy="71" rx="10" ry="3.2" fill="#8b5448"/>
  <circle cx="78" cy="66" r="1.5" fill="#c9b9a0"/><circle cx="131" cy="66" r="1.5" fill="#c9b9a0"/>
 </g>
</svg>
<div class="a" style="left:1401px;top:206px;width:122px;height:16px;background:rgba(45,45,45,.78);border-radius:3px"></div>
<div class="a ui" style="left:1404px;top:208px;font-size:10.6px;color:#ececec">Майрамгул Нурматова</div>

<!-- tile 2 -->
<svg class="a" style="left:1452px;top:224px" width="80" height="105" viewBox="0 0 80 105">
 <defs><linearGradient id="w2" x1="0" y1="0" x2="0" y2="1"><stop offset="0" stop-color="#e3d3c4"/><stop offset=".5" stop-color="#eadfd4"/><stop offset="1" stop-color="#f3eee8"/></linearGradient><filter id="bl2"><feGaussianBlur stdDeviation="1"/></filter>
 <radialGradient id="sk2" cx=".5" cy=".4" r=".6"><stop offset="0" stop-color="#d8b0a0"/><stop offset="1" stop-color="#b98a7a"/></radialGradient></defs>
 <rect width="80" height="105" fill="url(#w2)"/>
 <g filter="url(#bl2)">
  <path d="M0 56 80 48v4L0 60z" fill="#e0d2c4" opacity=".6"/>
  <path d="M19 70h6v30h-6z" fill="#6a3b33"/><path d="M58 72h22v22H60z" fill="#6a3b33"/>
  <path d="M63 78h15v12H63z" fill="#eceae6"/>
  <path d="M0 105c2-10 14-14 36-14s38 4 44 14z" fill="#aaa87c"/>
  <path d="M22 100c-3-22-1-44 6-56c7-10 22-10 28 0c6 12 8 34 4 56z" fill="#ad9d7c"/>
  <ellipse cx="42" cy="60" rx="12.5" ry="15" fill="url(#sk2)"/>
  <path d="M33 56h7M44 56h8" stroke="#6f5a52" stroke-width="1.3"/>
  <ellipse cx="42" cy="70" rx="4.5" ry="2" fill="#6a3f3a"/>
  <path d="M26 80c6 8 26 10 34 0l2 20H24z" fill="#a89878"/>
 </g>
</svg>
<div class="a" style="left:1397px;top:222px;width:191px;height:109px;border:2px solid #2dd387;border-radius:2px"></div>
<div class="a" style="left:1401px;top:311px;width:49px;height:16px;background:rgba(45,45,45,.78);border-radius:3px"></div>
<div class="a ui" style="left:1404px;top:313px;font-size:10.6px;color:#ececec">Аширкан</div>

<!-- tile 3 -->
<svg class="a" style="left:1452px;top:331px" width="80" height="104" viewBox="0 0 80 104">
 <defs><filter id="bl3"><feGaussianBlur stdDeviation="1.1"/></filter>
 <radialGradient id="sk3" cx=".45" cy=".4" r=".6"><stop offset="0" stop-color="#c29c90"/><stop offset="1" stop-color="#9a7468"/></radialGradient></defs>
 <rect width="80" height="104" fill="#ddd6ce"/>
 <rect width="80" height="23" fill="#bcad9e"/>
 <g fill="#4a3a30"><circle cx="8" cy="4" r="1.1"/><circle cx="18" cy="4" r="1.1"/><circle cx="28" cy="4" r="1.1"/><circle cx="38" cy="4" r="1.1"/><circle cx="48" cy="4" r="1.1"/><circle cx="58" cy="4" r="1.1"/><circle cx="68" cy="4" r="1.1"/><circle cx="9" cy="13" r="1.3"/><circle cx="19" cy="13" r="1.3"/><circle cx="29" cy="13" r="1.3"/><circle cx="39" cy="13" r="1.3"/><circle cx="49" cy="13" r="1.3"/><circle cx="59" cy="13" r="1.3"/><circle cx="69" cy="13" r="1.3"/></g>
 <g filter="url(#bl3)">
  <rect x="0" y="22" width="80" height="5" fill="#e6e2dc"/>
  <path d="M1 29h32v62H1z" fill="#d2cec8"/>
  <path d="M6 90 22 32M12 90 28 32M3 70 16 34M18 90 32 40" stroke="#5d625c" stroke-width="2"/>
  <path d="M2 52h30M2 64h28M2 76h26" stroke="#8a8e88" stroke-width="1.2"/>
  <rect x="32" y="32" width="16" height="10" fill="#3e3e3e"/>
  <path d="M33 104c0-14 8-22 20-24c10-2 22 0 27 4v20z" fill="#1b1b1d"/>
  <ellipse cx="43" cy="66" rx="16" ry="19" fill="url(#sk3)"/>
  <path d="M26 58c0-18 34-20 36 0c-6-6-30-6-36 0z" fill="#d0c8c4"/>
  <path d="M33 64h8M47 64h8" stroke="#4e3430" stroke-width="1.4"/>
  <ellipse cx="44" cy="78" rx="4.5" ry="1.8" fill="#7a4a45"/>
 </g>
</svg>
<div class="a" style="left:1401px;top:417px;width:117px;height:16px;background:rgba(45,45,45,.78);border-radius:3px"></div>
<div class="a ui" style="left:1404px;top:419px;font-size:10.6px;color:#ececec">Назгуль Рисдавлатова</div>

<!-- tile 4 -->
<div class="a ui" style="left:1396px;top:481px;width:193px;text-align:center;font-size:12.2px;font-weight:bold;color:#fff">Отабек Маруфов</div>
<div class="a" style="left:1401px;top:523px;width:94px;height:17px;background:rgba(50,50,50,.6);border-radius:3px"></div>
<div class="a ui" style="left:1404px;top:525px;font-size:10.6px;color:#e6e6e6">Отабек Маруфов</div>
<!-- tile 5 -->
<div class="a ui" style="left:1396px;top:586px;width:193px;text-align:center;font-size:12.2px;font-weight:bold;color:#fff;letter-spacing:.1px">Бурул &nbsp;Жуманаз...</div>
<div class="a" style="left:1401px;top:629px;width:128px;height:17px;background:rgba(50,50,50,.6);border-radius:3px"></div>
<svg class="a" style="left:1403px;top:630px" width="11" height="13" viewBox="0 0 11 13" fill="none" stroke="#e0433a" stroke-width="1.2"><rect x="3.5" y="1" width="4" height="7" rx="2" fill="#e0433a"/><path d="M2 6a3.5 3.5 0 0 0 7 0M5.5 10v2M1 12 10 1"/></svg>
<div class="a ui" style="left:1418px;top:631px;font-size:10.6px;color:#e6e6e6">Бурул Жуманазарова</div>
<!-- tile 6 -->
<div class="a" style="left:1459px;top:667px;width:67px;height:66px;background:#6f8694;border-radius:5px 5px 0 0"></div>
<div class="a" style="left:1459px;top:667px;width:67px;height:66px;text-align:center;font-size:36px;line-height:62px;color:#fff;font-family:'Liberation Sans',sans-serif">Д</div>
<div class="a" style="left:1396px;top:725px;width:193px;height:30px;background:linear-gradient(180deg,rgba(20,20,20,0),#141414 60%);border-radius:0 0 3px 3px"></div>
<div class="a ui" style="left:1403px;top:737px;font-size:11px;color:#3a3a3a">Дарика Илясова</div>
<svg class="a" style="left:1486px;top:737px" width="12" height="8" viewBox="0 0 12 8" fill="none" stroke="#fff" stroke-width="1.4"><path d="M1.5 1.5 6 6l4.5-4.5"/></svg>

<!-- bottom black bar -->
<div class="a" style="left:0;top:787px;width:924px;height:20px;background:#131313;border-radius:0 6px 0 0"></div>
<div class="a" style="left:31px;top:797px;width:4px;height:4px;border-radius:2px;background:#ddd"></div>
<div class="a ui" style="left:206px;top:793px;font-size:7px;color:#ddd">13</div>
<div class="a" style="left:282px;top:797px;width:12px;height:5px;border-radius:3px 3px 0 0;background:#ddd"></div>
<div class="a" style="left:512px;top:797px;width:3px;height:4px;background:#ddd"></div>
<div class="a" style="left:624px;top:797px;width:12px;height:5px;border-radius:6px 6px 0 0;border:1px solid #ddd;border-bottom:0"></div>
<div class="a" style="left:870px;top:797px;width:10px;height:5px;border-radius:5px 5px 0 0;border:1px solid #ddd;border-bottom:0"></div>

<!-- bottom-right mini toolbar -->
<div class="a" style="left:1285px;top:782px;width:175px;height:30px;background:#fbfbfb;border:1px solid #ececec;border-radius:7px;box-shadow:0 1px 4px rgba(0,0,0,.08)"></div>
<div class="a" style="left:1324px;top:787px;width:32px;height:20px;background:#f3f3f3;border-radius:4px"></div>
<div class="a" style="left:1300px;top:797px;width:8px;height:4px;border-top:2px solid #e8745a"></div>
<svg class="a" style="left:1334px;top:791px" width="12" height="10" viewBox="0 0 12 10"><path d="M1 10 11 1v9z" fill="#8a4fd0"/></svg>
<div class="a" style="left:1366px;top:794px;width:14px;height:8px;background:#7d3bc8;border-radius:2px 2px 0 0"></div>
<div class="a" style="left:1399px;top:795px;width:13px;height:7px;background:#2a79d0"></div>
<div class="a" style="left:1433px;top:794px;width:12px;height:12px;border:2px solid #222;border-radius:50%"></div>

<!--ZZ-->
<svg class="a" style="left:0;top:0" width="1600" height="800" viewBox="0 0 1600 800" fill="none" stroke="#d03030" stroke-width="1"><path d="M323.0 225.3L325.0 227.7L327.0 225.3L329.0 227.7L331.0 225.3L333.0 227.7L335.0 225.3L337.0 227.7L339.0 225.3L341.0 227.7L343.0 225.3L345.0 227.7L347.0 225.3L349.0 227.7L351.0 225.3L353.0 227.7L355.0 225.3L357.0 227.7L359.0 225.3L361.0 227.7L363.0 225.3L365.0 227.7L367.0 225.3L369.0 227.7L371.0 225.3L373.0 227.7L375.0 225.3L377.0 227.7L379.0 225.3L381.0 227.7L383.0 225.3L385.0 227.7L387.0 225.3L389.0 227.7L391.0 225.3L393.0 227.7L395.0 225.3L397.0 227.7L399.0 225.3L401.0 227.7L403.0 225.3L405.0 227.7L407.0 225.3L409.0 227.7L411.0 225.3L413.0 227.7L415.0 225.3L417.0 227.7L419.0 225.3L421.0 227.7L423.0 225.3L425.0 227.7L427.0 225.3L429.0 227.7L431.0 225.3L433.0 227.7L435.0 225.3L437.0 227.7L439.0 225.3L441.0 227.7L443.0 225.3L445.0 227.7L447.0 225.3L449.0 227.7L451.0 225.3L453.0 227.7L455.0 225.3L457.0 227.7L459.0 225.3L461.0 227.7L463.0 225.3L465.0 227.7L467.0 225.3L469.0 227.7L471.0 225.3L473.0 227.7L475.0 225.3L477.0 227.7L479.0 225.3L481.0 227.7L483.0 225.3L485.0 227.7L487.0 225.3L489.0 227.7L491.0 225.3L493.0 227.7L495.0 225.3L497.0 227.7L499.0 225.3L501.0 227.7L503.0 225.3L505.0 227.7L507.0 225.3L509.0 227.7 M598.0 225.3L600.0 227.7L602.0 225.3L604.0 227.7L606.0 225.3L608.0 227.7L610.0 225.3L612.0 227.7L614.0 225.3L616.0 227.7L618.0 225.3L620.0 227.7L622.0 225.3L624.0 227.7L626.0 225.3L628.0 227.7L630.0 225.3L632.0 227.7L634.0 225.3L636.0 227.7L638.0 225.3L640.0 227.7L642.0 225.3L644.0 227.7L646.0 225.3L648.0 227.7L650.0 225.3L652.0 227.7L654.0 225.3L656.0 227.7L658.0 225.3L660.0 227.7L662.0 225.3L664.0 227.7L666.0 225.3L668.0 227.7L670.0 225.3L672.0 227.7L674.0 225.3L676.0 227.7L678.0 225.3L680.0 227.7L682.0 225.3L684.0 227.7L686.0 225.3L688.0 227.7L690.0 225.3L692.0 227.7L694.0 225.3L696.0 227.7L698.0 225.3L700.0 227.7L702.0 225.3L704.0 227.7L706.0 225.3L708.0 227.7L710.0 225.3L712.0 227.7L714.0 225.3L716.0 227.7L718.0 225.3L720.0 227.7L722.0 225.3L724.0 227.7L726.0 225.3L728.0 227.7L730.0 225.3L732.0 227.7L734.0 225.3L736.0 227.7L738.0 225.3L740.0 227.7L742.0 225.3L744.0 227.7L746.0 225.3L748.0 227.7L750.0 225.3L752.0 227.7L754.0 225.3L756.0 227.7L758.0 225.3L760.0 227.7L762.0 225.3L764.0 227.7L766.0 225.3L768.0 227.7L770.0 225.3L772.0 227.7L774.0 225.3L776.0 227.7L778.0 225.3L780.0 227.7L782.0 225.3L784.0 227.7L786.0 225.3L788.0 227.7L790.0 225.3L792.0 227.7L794.0 225.3L796.0 227.7L798.0 225.3L800.0 227.7L802.0 225.3L804.0 227.7L806.0 225.3L808.0 227.7L810.0 225.3L812.0 227.7L814.0 225.3L816.0 227.7L818.0 225.3L820.0 227.7L822.0 225.3L824.0 227.7L826.0 225.3L828.0 227.7L830.0 225.3L832.0 227.7L834.0 225.3L836.0 227.7L838.0 225.3L840.0 227.7L842.0 225.3L844.0 227.7L846.0 225.3L848.0 227.7L850.0 225.3 M940.0 225.3L942.0 227.7L944.0 225.3L946.0 227.7L948.0 225.3L950.0 227.7L952.0 225.3L954.0 227.7L956.0 225.3L958.0 227.7L960.0 225.3L962.0 227.7L964.0 225.3L966.0 227.7L968.0 225.3L970.0 227.7L972.0 225.3L974.0 227.7L976.0 225.3L978.0 227.7L980.0 225.3L982.0 227.7L984.0 225.3L986.0 227.7L988.0 225.3L990.0 227.7L992.0 225.3L994.0 227.7L996.0 225.3L998.0 227.7L1000.0 225.3L1002.0 227.7L1004.0 225.3L1006.0 227.7L1008.0 225.3L1010.0 227.7L1012.0 225.3L1014.0 227.7L1016.0 225.3L1018.0 227.7L1020.0 225.3L1022.0 227.7L1024.0 225.3L1026.0 227.7L1028.0 225.3L1030.0 227.7L1032.0 225.3L1034.0 227.7L1036.0 225.3L1038.0 227.7L1040.0 225.3L1042.0 227.7L1044.0 225.3L1046.0 227.7L1048.0 225.3L1050.0 227.7L1052.0 225.3L1054.0 227.7L1056.0 225.3L1058.0 227.7L1060.0 225.3L1062.0 227.7L1064.0 225.3L1066.0 227.7L1068.0 225.3L1070.0 227.7L1072.0 225.3L1074.0 227.7L1076.0 225.3L1078.0 227.7L1080.0 225.3L1082.0 227.7L1084.0 225.3L1086.0 227.7L1088.0 225.3L1090.0 227.7L1092.0 225.3L1094.0 227.7L1096.0 225.3L1098.0 227.7L1100.0 225.3L1102.0 227.7L1104.0 225.3L1106.0 227.7L1108.0 225.3L1110.0 227.7L1112.0 225.3L1114.0 227.7L1116.0 225.3 M323.0 264.3L325.0 266.7L327.0 264.3L329.0 266.7L331.0 264.3L333.0 266.7L335.0 264.3L337.0 266.7L339.0 264.3L341.0 266.7L343.0 264.3L345.0 266.7L347.0 264.3L349.0 266.7L351.0 264.3L353.0 266.7L355.0 264.3L357.0 266.7L359.0 264.3L361.0 266.7L363.0 264.3L365.0 266.7L367.0 264.3L369.0 266.7L371.0 264.3L373.0 266.7L375.0 264.3L377.0 266.7L379.0 264.3L381.0 266.7L383.0 264.3L385.0 266.7L387.0 264.3L389.0 266.7L391.0 264.3L393.0 266.7L395.0 264.3L397.0 266.7L399.0 264.3L401.0 266.7L403.0 264.3L405.0 266.7L407.0 264.3L409.0 266.7L411.0 264.3L413.0 266.7L415.0 264.3L417.0 266.7L419.0 264.3L421.0 266.7L423.0 264.3L425.0 266.7L427.0 264.3L429.0 266.7L431.0 264.3L433.0 266.7L435.0 264.3L437.0 266.7L439.0 264.3L441.0 266.7L443.0 264.3L445.0 266.7L447.0 264.3L449.0 266.7L451.0 264.3L453.0 266.7L455.0 264.3L457.0 266.7L459.0 264.3L461.0 266.7L463.0 264.3L465.0 266.7L467.0 264.3L469.0 266.7L471.0 264.3L473.0 266.7L475.0 264.3L477.0 266.7L479.0 264.3L481.0 266.7L483.0 264.3L485.0 266.7L487.0 264.3L489.0 266.7L491.0 264.3L493.0 266.7L495.0 264.3L497.0 266.7L499.0 264.3L501.0 266.7L503.0 264.3L505.0 266.7L507.0 264.3L509.0 266.7L511.0 264.3L513.0 266.7L515.0 264.3L517.0 266.7L519.0 264.3L521.0 266.7L523.0 264.3L525.0 266.7L527.0 264.3L529.0 266.7L531.0 264.3L533.0 266.7L535.0 264.3L537.0 266.7L539.0 264.3L541.0 266.7L543.0 264.3L545.0 266.7L547.0 264.3L549.0 266.7L551.0 264.3L553.0 266.7 M570.0 264.3L572.0 266.7L574.0 264.3L576.0 266.7L578.0 264.3L580.0 266.7L582.0 264.3L584.0 266.7L586.0 264.3L588.0 266.7L590.0 264.3L592.0 266.7L594.0 264.3L596.0 266.7L598.0 264.3L600.0 266.7L602.0 264.3L604.0 266.7L606.0 264.3L608.0 266.7L610.0 264.3L612.0 266.7L614.0 264.3L616.0 266.7L618.0 264.3L620.0 266.7L622.0 264.3L624.0 266.7L626.0 264.3L628.0 266.7L630.0 264.3L632.0 266.7L634.0 264.3L636.0 266.7L638.0 264.3L640.0 266.7L642.0 264.3L644.0 266.7L646.0 264.3L648.0 266.7L650.0 264.3L652.0 266.7L654.0 264.3L656.0 266.7L658.0 264.3L660.0 266.7L662.0 264.3L664.0 266.7L666.0 264.3L668.0 266.7L670.0 264.3L672.0 266.7L674.0 264.3L676.0 266.7L678.0 264.3L680.0 266.7L682.0 264.3L684.0 266.7L686.0 264.3L688.0 266.7L690.0 264.3L692.0 266.7L694.0 264.3L696.0 266.7L698.0 264.3L700.0 266.7L702.0 264.3L704.0 266.7L706.0 264.3L708.0 266.7L710.0 264.3L712.0 266.7L714.0 264.3L716.0 266.7L718.0 264.3L720.0 266.7L722.0 264.3L724.0 266.7 M733.0 264.3L735.0 266.7L737.0 264.3L739.0 266.7L741.0 264.3L743.0 266.7L745.0 264.3L747.0 266.7L749.0 264.3L751.0 266.7L753.0 264.3L755.0 266.7L757.0 264.3L759.0 266.7L761.0 264.3L763.0 266.7L765.0 264.3L767.0 266.7L769.0 264.3L771.0 266.7L773.0 264.3L775.0 266.7L777.0 264.3L779.0 266.7L781.0 264.3L783.0 266.7L785.0 264.3L787.0 266.7L789.0 264.3L791.0 266.7L793.0 264.3L795.0 266.7L797.0 264.3L799.0 266.7L801.0 264.3L803.0 266.7L805.0 264.3L807.0 266.7L809.0 264.3L811.0 266.7L813.0 264.3L815.0 266.7L817.0 264.3L819.0 266.7L821.0 264.3L823.0 266.7L825.0 264.3L827.0 266.7L829.0 264.3L831.0 266.7L833.0 264.3L835.0 266.7L837.0 264.3L839.0 266.7L841.0 264.3L843.0 266.7L845.0 264.3L847.0 266.7L849.0 264.3L851.0 266.7L853.0 264.3L855.0 266.7L857.0 264.3L859.0 266.7L861.0 264.3L863.0 266.7L865.0 264.3L867.0 266.7 M383.0 305.3L385.0 307.7L387.0 305.3L389.0 307.7L391.0 305.3L393.0 307.7L395.0 305.3L397.0 307.7L399.0 305.3L401.0 307.7L403.0 305.3L405.0 307.7L407.0 305.3L409.0 307.7L411.0 305.3L413.0 307.7L415.0 305.3L417.0 307.7L419.0 305.3L421.0 307.7L423.0 305.3L425.0 307.7L427.0 305.3L429.0 307.7L431.0 305.3L433.0 307.7L435.0 305.3L437.0 307.7L439.0 305.3L441.0 307.7L443.0 305.3L445.0 307.7L447.0 305.3L449.0 307.7L451.0 305.3L453.0 307.7L455.0 305.3L457.0 307.7L459.0 305.3L461.0 307.7L463.0 305.3L465.0 307.7L467.0 305.3L469.0 307.7L471.0 305.3L473.0 307.7L475.0 305.3L477.0 307.7L479.0 305.3L481.0 307.7L483.0 305.3L485.0 307.7L487.0 305.3L489.0 307.7L491.0 305.3L493.0 307.7L495.0 305.3L497.0 307.7L499.0 305.3L501.0 307.7L503.0 305.3L505.0 307.7L507.0 305.3L509.0 307.7L511.0 305.3L513.0 307.7L515.0 305.3L517.0 307.7L519.0 305.3L521.0 307.7L523.0 305.3L525.0 307.7L527.0 305.3L529.0 307.7L531.0 305.3L533.0 307.7L535.0 305.3L537.0 307.7L539.0 305.3L541.0 307.7L543.0 305.3L545.0 307.7L547.0 305.3L549.0 307.7L551.0 305.3L553.0 307.7L555.0 305.3L557.0 307.7L559.0 305.3L561.0 307.7L563.0 305.3L565.0 307.7L567.0 305.3L569.0 307.7L571.0 305.3L573.0 307.7L575.0 305.3L577.0 307.7L579.0 305.3L581.0 307.7L583.0 305.3L585.0 307.7L587.0 305.3L589.0 307.7 M599.0 305.3L601.0 307.7L603.0 305.3L605.0 307.7L607.0 305.3L609.0 307.7L611.0 305.3L613.0 307.7L615.0 305.3L617.0 307.7L619.0 305.3L621.0 307.7L623.0 305.3L625.0 307.7L627.0 305.3L629.0 307.7L631.0 305.3L633.0 307.7L635.0 305.3L637.0 307.7L639.0 305.3L641.0 307.7L643.0 305.3L645.0 307.7L647.0 305.3L649.0 307.7L651.0 305.3L653.0 307.7L655.0 305.3L657.0 307.7L659.0 305.3L661.0 307.7L663.0 305.3L665.0 307.7L667.0 305.3L669.0 307.7 M678.0 305.3L680.0 307.7L682.0 305.3L684.0 307.7L686.0 305.3L688.0 307.7L690.0 305.3L692.0 307.7L694.0 305.3L696.0 307.7L698.0 305.3L700.0 307.7L702.0 305.3L704.0 307.7L706.0 305.3L708.0 307.7L710.0 305.3L712.0 307.7L714.0 305.3L716.0 307.7L718.0 305.3L720.0 307.7L722.0 305.3L724.0 307.7L726.0 305.3L728.0 307.7L730.0 305.3L732.0 307.7L734.0 305.3L736.0 307.7L738.0 305.3L740.0 307.7L742.0 305.3L744.0 307.7L746.0 305.3L748.0 307.7L750.0 305.3L752.0 307.7L754.0 305.3L756.0 307.7L758.0 305.3L760.0 307.7L762.0 305.3L764.0 307.7L766.0 305.3L768.0 307.7L770.0 305.3L772.0 307.7L774.0 305.3L776.0 307.7L778.0 305.3L780.0 307.7L782.0 305.3L784.0 307.7L786.0 305.3L788.0 307.7L790.0 305.3L792.0 307.7L794.0 305.3L796.0 307.7L798.0 305.3 M808.0 305.3L810.0 307.7L812.0 305.3L814.0 307.7L816.0 305.3L818.0 307.7L820.0 305.3L822.0 307.7L824.0 305.3L826.0 307.7L828.0 305.3L830.0 307.7L832.0 305.3L834.0 307.7L836.0 305.3L838.0 307.7L840.0 305.3L842.0 307.7L844.0 305.3L846.0 307.7L848.0 305.3L850.0 307.7L852.0 305.3L854.0 307.7L856.0 305.3L858.0 307.7L860.0 305.3L862.0 307.7L864.0 305.3L866.0 307.7L868.0 305.3L870.0 307.7L872.0 305.3L874.0 307.7L876.0 305.3L878.0 307.7L880.0 305.3L882.0 307.7L884.0 305.3L886.0 307.7L888.0 305.3L890.0 307.7L892.0 305.3L894.0 307.7L896.0 305.3L898.0 307.7L900.0 305.3L902.0 307.7L904.0 305.3L906.0 307.7L908.0 305.3L910.0 307.7L912.0 305.3L914.0 307.7L916.0 305.3L918.0 307.7L920.0 305.3L922.0 307.7L924.0 305.3L926.0 307.7L928.0 305.3L930.0 307.7L932.0 305.3L934.0 307.7L936.0 305.3L938.0 307.7L940.0 305.3L942.0 307.7L944.0 305.3L946.0 307.7L948.0 305.3L950.0 307.7L952.0 305.3L954.0 307.7L956.0 305.3L958.0 307.7L960.0 305.3L962.0 307.7L964.0 305.3L966.0 307.7L968.0 305.3L970.0 307.7L972.0 305.3L974.0 307.7L976.0 305.3L978.0 307.7L980.0 305.3L982.0 307.7L984.0 305.3L986.0 307.7L988.0 305.3L990.0 307.7L992.0 305.3L994.0 307.7L996.0 305.3L998.0 307.7L1000.0 305.3L1002.0 307.7L1004.0 305.3L1006.0 307.7L1008.0 305.3 M1017.0 305.3L1019.0 307.7L1021.0 305.3L1023.0 307.7L1025.0 305.3L1027.0 307.7L1029.0 305.3L1031.0 307.7L1033.0 305.3L1035.0 307.7L1037.0 305.3L1039.0 307.7L1041.0 305.3L1043.0 307.7L1045.0 305.3L1047.0 307.7L1049.0 305.3L1051.0 307.7L1053.0 305.3L1055.0 307.7L1057.0 305.3L1059.0 307.7L1061.0 305.3L1063.0 307.7L1065.0 305.3L1067.0 307.7L1069.0 305.3L1071.0 307.7L1073.0 305.3L1075.0 307.7L1077.0 305.3L1079.0 307.7L1081.0 305.3L1083.0 307.7L1085.0 305.3L1087.0 307.7L1089.0 305.3L1091.0 307.7L1093.0 305.3L1095.0 307.7L1097.0 305.3 M383.0 346.3L385.0 348.7L387.0 346.3L389.0 348.7L391.0 346.3L393.0 348.7L395.0 346.3L397.0 348.7L399.0 346.3L401.0 348.7L403.0 346.3L405.0 348.7L407.0 346.3L409.0 348.7L411.0 346.3L413.0 348.7L415.0 346.3L417.0 348.7L419.0 346.3L421.0 348.7L423.0 346.3L425.0 348.7L427.0 346.3L429.0 348.7L431.0 346.3L433.0 348.7L435.0 346.3L437.0 348.7L439.0 346.3L441.0 348.7L443.0 346.3L445.0 348.7L447.0 346.3L449.0 348.7L451.0 346.3L453.0 348.7L455.0 346.3L457.0 348.7L459.0 346.3L461.0 348.7L463.0 346.3L465.0 348.7L467.0 346.3L469.0 348.7L471.0 346.3L473.0 348.7L475.0 346.3L477.0 348.7L479.0 346.3L481.0 348.7L483.0 346.3L485.0 348.7L487.0 346.3L489.0 348.7L491.0 346.3L493.0 348.7L495.0 346.3L497.0 348.7L499.0 346.3L501.0 348.7L503.0 346.3L505.0 348.7L507.0 346.3L509.0 348.7L511.0 346.3 M592.0 346.3L594.0 348.7L596.0 346.3L598.0 348.7L600.0 346.3L602.0 348.7L604.0 346.3L606.0 348.7L608.0 346.3L610.0 348.7L612.0 346.3L614.0 348.7L616.0 346.3L618.0 348.7L620.0 346.3L622.0 348.7L624.0 346.3L626.0 348.7L628.0 346.3L630.0 348.7L632.0 346.3L634.0 348.7L636.0 346.3L638.0 348.7L640.0 346.3L642.0 348.7L644.0 346.3L646.0 348.7L648.0 346.3L650.0 348.7L652.0 346.3L654.0 348.7L656.0 346.3L658.0 348.7L660.0 346.3L662.0 348.7L664.0 346.3L666.0 348.7L668.0 346.3L670.0 348.7L672.0 346.3L674.0 348.7L676.0 346.3L678.0 348.7L680.0 346.3L682.0 348.7L684.0 346.3L686.0 348.7L688.0 346.3L690.0 348.7L692.0 346.3L694.0 348.7L696.0 346.3L698.0 348.7L700.0 346.3 M782.0 346.3L784.0 348.7L786.0 346.3L788.0 348.7L790.0 346.3L792.0 348.7L794.0 346.3L796.0 348.7L798.0 346.3L800.0 348.7L802.0 346.3L804.0 348.7L806.0 346.3L808.0 348.7L810.0 346.3L812.0 348.7L814.0 346.3L816.0 348.7L818.0 346.3L820.0 348.7L822.0 346.3L824.0 348.7L826.0 346.3L828.0 348.7L830.0 346.3L832.0 348.7L834.0 346.3L836.0 348.7L838.0 346.3L840.0 348.7L842.0 346.3L844.0 348.7L846.0 346.3L848.0 348.7L850.0 346.3L852.0 348.7 M933.0 346.3L935.0 348.7L937.0 346.3L939.0 348.7L941.0 346.3L943.0 348.7L945.0 346.3L947.0 348.7L949.0 346.3L951.0 348.7L953.0 346.3L955.0 348.7L957.0 346.3L959.0 348.7L961.0 346.3L963.0 348.7L965.0 346.3L967.0 348.7L969.0 346.3L971.0 348.7L973.0 346.3L975.0 348.7L977.0 346.3L979.0 348.7L981.0 346.3L983.0 348.7L985.0 346.3L987.0 348.7L989.0 346.3L991.0 348.7L993.0 346.3L995.0 348.7L997.0 346.3L999.0 348.7L1001.0 346.3L1003.0 348.7L1005.0 346.3L1007.0 348.7L1009.0 346.3L1011.0 348.7L1013.0 346.3L1015.0 348.7L1017.0 346.3L1019.0 348.7L1021.0 346.3L1023.0 348.7L1025.0 346.3L1027.0 348.7L1029.0 346.3L1031.0 348.7L1033.0 346.3L1035.0 348.7L1037.0 346.3L1039.0 348.7L1041.0 346.3L1043.0 348.7L1045.0 346.3L1047.0 348.7L1049.0 346.3L1051.0 348.7L1053.0 346.3L1055.0 348.7L1057.0 346.3L1059.0 348.7L1061.0 346.3L1063.0 348.7L1065.0 346.3L1067.0 348.7L1069.0 346.3L1071.0 348.7L1073.0 346.3L1075.0 348.7L1077.0 346.3L1079.0 348.7L1081.0 346.3L1083.0 348.7L1085.0 346.3L1087.0 348.7L1089.0 346.3L1091.0 348.7L1093.0 346.3L1095.0 348.7L1097.0 346.3L1099.0 348.7L1101.0 346.3L1103.0 348.7L1105.0 346.3L1107.0 348.7L1109.0 346.3L1111.0 348.7L1113.0 346.3L1115.0 348.7L1117.0 346.3 M383.0 384.3L385.0 386.7L387.0 384.3L389.0 386.7L391.0 384.3L393.0 386.7L395.0 384.3L397.0 386.7L399.0 384.3L401.0 386.7L403.0 384.3L405.0 386.7L407.0 384.3L409.0 386.7L411.0 384.3L413.0 386.7L415.0 384.3L417.0 386.7L419.0 384.3L421.0 386.7L423.0 384.3L425.0 386.7L427.0 384.3L429.0 386.7L431.0 384.3L433.0 386.7L435.0 384.3L437.0 386.7L439.0 384.3L441.0 386.7L443.0 384.3L445.0 386.7L447.0 384.3L449.0 386.7L451.0 384.3L453.0 386.7L455.0 384.3L457.0 386.7L459.0 384.3L461.0 386.7L463.0 384.3L465.0 386.7L467.0 384.3L469.0 386.7L471.0 384.3L473.0 386.7L475.0 384.3L477.0 386.7L479.0 384.3L481.0 386.7L483.0 384.3L485.0 386.7L487.0 384.3L489.0 386.7L491.0 384.3L493.0 386.7L495.0 384.3L497.0 386.7L499.0 384.3L501.0 386.7L503.0 384.3L505.0 386.7L507.0 384.3L509.0 386.7L511.0 384.3L513.0 386.7L515.0 384.3L517.0 386.7L519.0 384.3L521.0 386.7L523.0 384.3L525.0 386.7L527.0 384.3L529.0 386.7L531.0 384.3L533.0 386.7L535.0 384.3L537.0 386.7L539.0 384.3L541.0 386.7L543.0 384.3L545.0 386.7L547.0 384.3L549.0 386.7L551.0 384.3L553.0 386.7L555.0 384.3L557.0 386.7L559.0 384.3L561.0 386.7L563.0 384.3L565.0 386.7L567.0 384.3L569.0 386.7L571.0 384.3L573.0 386.7L575.0 384.3L577.0 386.7L579.0 384.3L581.0 386.7L583.0 384.3L585.0 386.7L587.0 384.3L589.0 386.7L591.0 384.3L593.0 386.7L595.0 384.3L597.0 386.7L599.0 384.3L601.0 386.7 M611.0 384.3L613.0 386.7L615.0 384.3L617.0 386.7L619.0 384.3L621.0 386.7L623.0 384.3L625.0 386.7L627.0 384.3L629.0 386.7L631.0 384.3L633.0 386.7L635.0 384.3L637.0 386.7L639.0 384.3L641.0 386.7L643.0 384.3L645.0 386.7L647.0 384.3L649.0 386.7L651.0 384.3L653.0 386.7L655.0 384.3L657.0 386.7L659.0 384.3L661.0 386.7L663.0 384.3L665.0 386.7L667.0 384.3L669.0 386.7L671.0 384.3L673.0 386.7L675.0 384.3L677.0 386.7L679.0 384.3L681.0 386.7L683.0 384.3L685.0 386.7L687.0 384.3L689.0 386.7L691.0 384.3L693.0 386.7L695.0 384.3L697.0 386.7L699.0 384.3L701.0 386.7L703.0 384.3L705.0 386.7L707.0 384.3 M383.0 426.3L385.0 428.7L387.0 426.3L389.0 428.7L391.0 426.3L393.0 428.7L395.0 426.3L397.0 428.7L399.0 426.3L401.0 428.7L403.0 426.3L405.0 428.7L407.0 426.3L409.0 428.7L411.0 426.3L413.0 428.7L415.0 426.3L417.0 428.7L419.0 426.3L421.0 428.7L423.0 426.3L425.0 428.7L427.0 426.3L429.0 428.7L431.0 426.3L433.0 428.7L435.0 426.3L437.0 428.7L439.0 426.3L441.0 428.7L443.0 426.3L445.0 428.7L447.0 426.3L449.0 428.7L451.0 426.3L453.0 428.7L455.0 426.3L457.0 428.7L459.0 426.3L461.0 428.7L463.0 426.3L465.0 428.7L467.0 426.3L469.0 428.7L471.0 426.3L473.0 428.7L475.0 426.3L477.0 428.7L479.0 426.3L481.0 428.7L483.0 426.3L485.0 428.7L487.0 426.3L489.0 428.7L491.0 426.3L493.0 428.7L495.0 426.3L497.0 428.7L499.0 426.3L501.0 428.7L503.0 426.3L505.0 428.7L507.0 426.3L509.0 428.7L511.0 426.3L513.0 428.7L515.0 426.3L517.0 428.7L519.0 426.3L521.0 428.7L523.0 426.3L525.0 428.7L527.0 426.3L529.0 428.7L531.0 426.3L533.0 428.7L535.0 426.3L537.0 428.7L539.0 426.3L541.0 428.7L543.0 426.3L545.0 428.7L547.0 426.3L549.0 428.7L551.0 426.3L553.0 428.7L555.0 426.3L557.0 428.7 M600.0 426.3L602.0 428.7L604.0 426.3L606.0 428.7L608.0 426.3L610.0 428.7L612.0 426.3L614.0 428.7L616.0 426.3L618.0 428.7L620.0 426.3L622.0 428.7L624.0 426.3L626.0 428.7L628.0 426.3L630.0 428.7L632.0 426.3L634.0 428.7L636.0 426.3L638.0 428.7L640.0 426.3L642.0 428.7L644.0 426.3L646.0 428.7L648.0 426.3L650.0 428.7L652.0 426.3L654.0 428.7L656.0 426.3L658.0 428.7L660.0 426.3L662.0 428.7L664.0 426.3L666.0 428.7L668.0 426.3L670.0 428.7L672.0 426.3L674.0 428.7L676.0 426.3L678.0 428.7L680.0 426.3L682.0 428.7L684.0 426.3L686.0 428.7L688.0 426.3L690.0 428.7L692.0 426.3L694.0 428.7L696.0 426.3L698.0 428.7L700.0 426.3L702.0 428.7L704.0 426.3L706.0 428.7L708.0 426.3L710.0 428.7L712.0 426.3L714.0 428.7L716.0 426.3L718.0 428.7L720.0 426.3L722.0 428.7L724.0 426.3L726.0 428.7L728.0 426.3L730.0 428.7L732.0 426.3L734.0 428.7L736.0 426.3L738.0 428.7L740.0 426.3L742.0 428.7L744.0 426.3L746.0 428.7L748.0 426.3L750.0 428.7L752.0 426.3L754.0 428.7L756.0 426.3L758.0 428.7L760.0 426.3L762.0 428.7L764.0 426.3 M805.0 426.3L807.0 428.7L809.0 426.3L811.0 428.7L813.0 426.3L815.0 428.7L817.0 426.3L819.0 428.7L821.0 426.3L823.0 428.7L825.0 426.3L827.0 428.7L829.0 426.3L831.0 428.7L833.0 426.3L835.0 428.7L837.0 426.3L839.0 428.7L841.0 426.3L843.0 428.7L845.0 426.3L847.0 428.7L849.0 426.3L851.0 428.7L853.0 426.3L855.0 428.7L857.0 426.3L859.0 428.7L861.0 426.3L863.0 428.7L865.0 426.3L867.0 428.7L869.0 426.3L871.0 428.7L873.0 426.3L875.0 428.7L877.0 426.3L879.0 428.7L881.0 426.3L883.0 428.7L885.0 426.3L887.0 428.7L889.0 426.3L891.0 428.7 M933.0 426.3L935.0 428.7L937.0 426.3L939.0 428.7L941.0 426.3L943.0 428.7L945.0 426.3L947.0 428.7L949.0 426.3L951.0 428.7L953.0 426.3L955.0 428.7L957.0 426.3L959.0 428.7L961.0 426.3L963.0 428.7L965.0 426.3L967.0 428.7L969.0 426.3L971.0 428.7L973.0 426.3L975.0 428.7L977.0 426.3L979.0 428.7L981.0 426.3L983.0 428.7L985.0 426.3L987.0 428.7L989.0 426.3L991.0 428.7L993.0 426.3L995.0 428.7L997.0 426.3L999.0 428.7L1001.0 426.3L1003.0 428.7L1005.0 426.3L1007.0 428.7L1009.0 426.3L1011.0 428.7L1013.0 426.3L1015.0 428.7L1017.0 426.3L1019.0 428.7L1021.0 426.3L1023.0 428.7L1025.0 426.3L1027.0 428.7L1029.0 426.3L1031.0 428.7L1033.0 426.3L1035.0 428.7L1037.0 426.3L1039.0 428.7L1041.0 426.3L1043.0 428.7L1045.0 426.3L1047.0 428.7L1049.0 426.3L1051.0 428.7L1053.0 426.3L1055.0 428.7L1057.0 426.3L1059.0 428.7L1061.0 426.3L1063.0 428.7L1065.0 426.3L1067.0 428.7L1069.0 426.3L1071.0 428.7L1073.0 426.3L1075.0 428.7L1077.0 426.3L1079.0 428.7L1081.0 426.3L1083.0 428.7L1085.0 426.3L1087.0 428.7L1089.0 426.3L1091.0 428.7L1093.0 426.3L1095.0 428.7L1097.0 426.3L1099.0 428.7L1101.0 426.3L1103.0 428.7L1105.0 426.3L1107.0 428.7L1109.0 426.3L1111.0 428.7L1113.0 426.3L1115.0 428.7L1117.0 426.3 M383.0 465.3L385.0 467.7L387.0 465.3L389.0 467.7L391.0 465.3L393.0 467.7L395.0 465.3L397.0 467.7L399.0 465.3L401.0 467.7L403.0 465.3L405.0 467.7L407.0 465.3L409.0 467.7L411.0 465.3L413.0 467.7L415.0 465.3L417.0 467.7L419.0 465.3L421.0 467.7L423.0 465.3L425.0 467.7L427.0 465.3L429.0 467.7L431.0 465.3L433.0 467.7L435.0 465.3L437.0 467.7L439.0 465.3L441.0 467.7L443.0 465.3L445.0 467.7L447.0 465.3L449.0 467.7L451.0 465.3L453.0 467.7L455.0 465.3L457.0 467.7L459.0 465.3L461.0 467.7L463.0 465.3L465.0 467.7L467.0 465.3L469.0 467.7L471.0 465.3L473.0 467.7L475.0 465.3L477.0 467.7L479.0 465.3L481.0 467.7L483.0 465.3L485.0 467.7L487.0 465.3L489.0 467.7L491.0 465.3L493.0 467.7L495.0 465.3L497.0 467.7L499.0 465.3L501.0 467.7L503.0 465.3L505.0 467.7L507.0 465.3L509.0 467.7L511.0 465.3L513.0 467.7 M1156.0 225.3L1158.0 227.7L1160.0 225.3L1162.0 227.7L1164.0 225.3L1166.0 227.7L1168.0 225.3L1170.0 227.7L1172.0 225.3L1174.0 227.7L1176.0 225.3L1178.0 227.7L1180.0 225.3L1182.0 227.7L1184.0 225.3L1186.0 227.7L1188.0 225.3L1190.0 227.7L1192.0 225.3L1194.0 227.7L1196.0 225.3L1198.0 227.7L1200.0 225.3L1202.0 227.7L1204.0 225.3L1206.0 227.7L1208.0 225.3L1210.0 227.7L1212.0 225.3L1214.0 227.7L1216.0 225.3L1218.0 227.7L1220.0 225.3L1222.0 227.7L1224.0 225.3L1226.0 227.7L1228.0 225.3L1230.0 227.7L1232.0 225.3L1234.0 227.7L1236.0 225.3L1238.0 227.7L1240.0 225.3L1242.0 227.7L1244.0 225.3L1246.0 227.7L1248.0 225.3L1250.0 227.7L1252.0 225.3L1254.0 227.7L1256.0 225.3L1258.0 227.7L1260.0 225.3L1262.0 227.7L1264.0 225.3L1266.0 227.7L1268.0 225.3L1270.0 227.7L1272.0 225.3L1274.0 227.7L1276.0 225.3L1278.0 227.7L1280.0 225.3L1282.0 227.7L1284.0 225.3L1286.0 227.7L1288.0 225.3L1290.0 227.7L1292.0 225.3L1294.0 227.7L1296.0 225.3 M323.0 505.3L325.0 507.7L327.0 505.3L329.0 507.7L331.0 505.3L333.0 507.7L335.0 505.3L337.0 507.7L339.0 505.3L341.0 507.7L343.0 505.3L345.0 507.7L347.0 505.3L349.0 507.7L351.0 505.3L353.0 507.7L355.0 505.3L357.0 507.7L359.0 505.3L361.0 507.7L363.0 505.3L365.0 507.7L367.0 505.3L369.0 507.7L371.0 505.3L373.0 507.7L375.0 505.3L377.0 507.7L379.0 505.3L381.0 507.7L383.0 505.3L385.0 507.7L387.0 505.3L389.0 507.7L391.0 505.3L393.0 507.7L395.0 505.3L397.0 507.7L399.0 505.3L401.0 507.7L403.0 505.3L405.0 507.7L407.0 505.3L409.0 507.7L411.0 505.3L413.0 507.7L415.0 505.3L417.0 507.7L419.0 505.3L421.0 507.7L423.0 505.3L425.0 507.7L427.0 505.3L429.0 507.7L431.0 505.3L433.0 507.7L435.0 505.3L437.0 507.7L439.0 505.3L441.0 507.7L443.0 505.3L445.0 507.7L447.0 505.3L449.0 507.7L451.0 505.3L453.0 507.7L455.0 505.3L457.0 507.7L459.0 505.3L461.0 507.7L463.0 505.3L465.0 507.7L467.0 505.3L469.0 507.7L471.0 505.3L473.0 507.7L475.0 505.3L477.0 507.7L479.0 505.3L481.0 507.7L483.0 505.3 M492.0 505.3L494.0 507.7L496.0 505.3L498.0 507.7L500.0 505.3L502.0 507.7L504.0 505.3L506.0 507.7L508.0 505.3L510.0 507.7L512.0 505.3L514.0 507.7L516.0 505.3L518.0 507.7L520.0 505.3L522.0 507.7L524.0 505.3L526.0 507.7L528.0 505.3L530.0 507.7L532.0 505.3L534.0 507.7L536.0 505.3L538.0 507.7L540.0 505.3L542.0 507.7L544.0 505.3L546.0 507.7L548.0 505.3L550.0 507.7L552.0 505.3L554.0 507.7L556.0 505.3L558.0 507.7L560.0 505.3L562.0 507.7L564.0 505.3L566.0 507.7L568.0 505.3L570.0 507.7L572.0 505.3L574.0 507.7L576.0 505.3L578.0 507.7L580.0 505.3L582.0 507.7L584.0 505.3L586.0 507.7L588.0 505.3L590.0 507.7L592.0 505.3L594.0 507.7L596.0 505.3 M606.0 505.3L608.0 507.7L610.0 505.3L612.0 507.7L614.0 505.3L616.0 507.7L618.0 505.3L620.0 507.7L622.0 505.3L624.0 507.7L626.0 505.3L628.0 507.7L630.0 505.3L632.0 507.7L634.0 505.3L636.0 507.7L638.0 505.3L640.0 507.7L642.0 505.3L644.0 507.7L646.0 505.3L648.0 507.7L650.0 505.3L652.0 507.7L654.0 505.3L656.0 507.7L658.0 505.3L660.0 507.7L662.0 505.3L664.0 507.7L666.0 505.3L668.0 507.7L670.0 505.3L672.0 507.7L674.0 505.3L676.0 507.7L678.0 505.3L680.0 507.7L682.0 505.3L684.0 507.7L686.0 505.3L688.0 507.7 M698.0 505.3L700.0 507.7L702.0 505.3L704.0 507.7L706.0 505.3L708.0 507.7L710.0 505.3L712.0 507.7L714.0 505.3L716.0 507.7L718.0 505.3L720.0 507.7L722.0 505.3L724.0 507.7L726.0 505.3L728.0 507.7L730.0 505.3L732.0 507.7L734.0 505.3L736.0 507.7L738.0 505.3L740.0 507.7L742.0 505.3L744.0 507.7L746.0 505.3L748.0 507.7L750.0 505.3L752.0 507.7L754.0 505.3L756.0 507.7L758.0 505.3L760.0 507.7L762.0 505.3L764.0 507.7L766.0 505.3L768.0 507.7L770.0 505.3L772.0 507.7L774.0 505.3L776.0 507.7L778.0 505.3L780.0 507.7L782.0 505.3L784.0 507.7L786.0 505.3L788.0 507.7L790.0 505.3L792.0 507.7L794.0 505.3L796.0 507.7L798.0 505.3L800.0 507.7L802.0 505.3L804.0 507.7L806.0 505.3L808.0 507.7L810.0 505.3L812.0 507.7L814.0 505.3L816.0 507.7L818.0 505.3L820.0 507.7L822.0 505.3L824.0 507.7L826.0 505.3L828.0 507.7L830.0 505.3L832.0 507.7L834.0 505.3L836.0 507.7L838.0 505.3L840.0 507.7L842.0 505.3L844.0 507.7L846.0 505.3L848.0 507.7L850.0 505.3L852.0 507.7L854.0 505.3L856.0 507.7L858.0 505.3L860.0 507.7L862.0 505.3L864.0 507.7L866.0 505.3L868.0 507.7L870.0 505.3L872.0 507.7L874.0 505.3L876.0 507.7L878.0 505.3L880.0 507.7L882.0 505.3L884.0 507.7L886.0 505.3L888.0 507.7L890.0 505.3L892.0 507.7L894.0 505.3L896.0 507.7L898.0 505.3L900.0 507.7L902.0 505.3L904.0 507.7L906.0 505.3L908.0 507.7L910.0 505.3L912.0 507.7L914.0 505.3L916.0 507.7L918.0 505.3L920.0 507.7L922.0 505.3L924.0 507.7L926.0 505.3 M935.0 505.3L937.0 507.7L939.0 505.3L941.0 507.7L943.0 505.3L945.0 507.7L947.0 505.3L949.0 507.7L951.0 505.3L953.0 507.7L955.0 505.3L957.0 507.7L959.0 505.3L961.0 507.7L963.0 505.3L965.0 507.7L967.0 505.3L969.0 507.7L971.0 505.3L973.0 507.7L975.0 505.3L977.0 507.7L979.0 505.3L981.0 507.7L983.0 505.3L985.0 507.7L987.0 505.3L989.0 507.7L991.0 505.3L993.0 507.7L995.0 505.3L997.0 507.7L999.0 505.3L1001.0 507.7L1003.0 505.3L1005.0 507.7L1007.0 505.3L1009.0 507.7L1011.0 505.3L1013.0 507.7L1015.0 505.3L1017.0 507.7L1019.0 505.3L1021.0 507.7L1023.0 505.3L1025.0 507.7L1027.0 505.3L1029.0 507.7L1031.0 505.3L1033.0 507.7L1035.0 505.3L1037.0 507.7L1039.0 505.3L1041.0 507.7L1043.0 505.3L1045.0 507.7L1047.0 505.3L1049.0 507.7L1051.0 505.3 M383.0 545.3L385.0 547.7L387.0 545.3L389.0 547.7L391.0 545.3L393.0 547.7L395.0 545.3L397.0 547.7L399.0 545.3L401.0 547.7L403.0 545.3L405.0 547.7L407.0 545.3L409.0 547.7L411.0 545.3L413.0 547.7L415.0 545.3L417.0 547.7L419.0 545.3L421.0 547.7L423.0 545.3L425.0 547.7L427.0 545.3L429.0 547.7L431.0 545.3L433.0 547.7L435.0 545.3L437.0 547.7L439.0 545.3L441.0 547.7L443.0 545.3L445.0 547.7L447.0 545.3L449.0 547.7L451.0 545.3L453.0 547.7L455.0 545.3L457.0 547.7L459.0 545.3L461.0 547.7L463.0 545.3L465.0 547.7L467.0 545.3L469.0 547.7L471.0 545.3L473.0 547.7L475.0 545.3L477.0 547.7L479.0 545.3L481.0 547.7L483.0 545.3L485.0 547.7L487.0 545.3L489.0 547.7L491.0 545.3L493.0 547.7L495.0 545.3L497.0 547.7L499.0 545.3L501.0 547.7L503.0 545.3L505.0 547.7L507.0 545.3L509.0 547.7L511.0 545.3L513.0 547.7L515.0 545.3L517.0 547.7L519.0 545.3L521.0 547.7L523.0 545.3L525.0 547.7L527.0 545.3L529.0 547.7L531.0 545.3 M577.0 545.3L579.0 547.7L581.0 545.3L583.0 547.7L585.0 545.3L587.0 547.7L589.0 545.3L591.0 547.7L593.0 545.3L595.0 547.7L597.0 545.3L599.0 547.7L601.0 545.3L603.0 547.7L605.0 545.3L607.0 547.7L609.0 545.3L611.0 547.7L613.0 545.3L615.0 547.7L617.0 545.3L619.0 547.7L621.0 545.3L623.0 547.7L625.0 545.3L627.0 547.7L629.0 545.3L631.0 547.7L633.0 545.3L635.0 547.7L637.0 545.3L639.0 547.7L641.0 545.3L643.0 547.7L645.0 545.3L647.0 547.7L649.0 545.3L651.0 547.7L653.0 545.3L655.0 547.7L657.0 545.3L659.0 547.7L661.0 545.3L663.0 547.7L665.0 545.3L667.0 547.7L669.0 545.3L671.0 547.7L673.0 545.3L675.0 547.7L677.0 545.3L679.0 547.7L681.0 545.3L683.0 547.7L685.0 545.3L687.0 547.7L689.0 545.3L691.0 547.7L693.0 545.3L695.0 547.7L697.0 545.3L699.0 547.7L701.0 545.3L703.0 547.7L705.0 545.3L707.0 547.7L709.0 545.3L711.0 547.7L713.0 545.3L715.0 547.7L717.0 545.3L719.0 547.7L721.0 545.3L723.0 547.7L725.0 545.3L727.0 547.7L729.0 545.3L731.0 547.7L733.0 545.3L735.0 547.7L737.0 545.3L739.0 547.7L741.0 545.3L743.0 547.7 M799.0 545.3L801.0 547.7L803.0 545.3L805.0 547.7L807.0 545.3L809.0 547.7L811.0 545.3L813.0 547.7L815.0 545.3L817.0 547.7L819.0 545.3L821.0 547.7L823.0 545.3L825.0 547.7L827.0 545.3L829.0 547.7L831.0 545.3L833.0 547.7L835.0 545.3L837.0 547.7L839.0 545.3L841.0 547.7L843.0 545.3L845.0 547.7L847.0 545.3L849.0 547.7L851.0 545.3L853.0 547.7L855.0 545.3L857.0 547.7L859.0 545.3L861.0 547.7L863.0 545.3L865.0 547.7L867.0 545.3L869.0 547.7L871.0 545.3L873.0 547.7L875.0 545.3L877.0 547.7L879.0 545.3L881.0 547.7L883.0 545.3L885.0 547.7L887.0 545.3L889.0 547.7L891.0 545.3L893.0 547.7L895.0 545.3L897.0 547.7L899.0 545.3L901.0 547.7L903.0 545.3L905.0 547.7L907.0 545.3L909.0 547.7 M954.0 545.3L956.0 547.7L958.0 545.3L960.0 547.7L962.0 545.3L964.0 547.7L966.0 545.3L968.0 547.7L970.0 545.3L972.0 547.7L974.0 545.3L976.0 547.7L978.0 545.3L980.0 547.7L982.0 545.3L984.0 547.7L986.0 545.3L988.0 547.7L990.0 545.3L992.0 547.7L994.0 545.3L996.0 547.7L998.0 545.3L1000.0 547.7L1002.0 545.3L1004.0 547.7L1006.0 545.3L1008.0 547.7L1010.0 545.3L1012.0 547.7L1014.0 545.3L1016.0 547.7L1018.0 545.3L1020.0 547.7L1022.0 545.3L1024.0 547.7L1026.0 545.3L1028.0 547.7L1030.0 545.3L1032.0 547.7L1034.0 545.3L1036.0 547.7L1038.0 545.3L1040.0 547.7L1042.0 545.3L1044.0 547.7L1046.0 545.3L1048.0 547.7L1050.0 545.3L1052.0 547.7L1054.0 545.3L1056.0 547.7L1058.0 545.3L1060.0 547.7L1062.0 545.3L1064.0 547.7L1066.0 545.3L1068.0 547.7L1070.0 545.3L1072.0 547.7L1074.0 545.3L1076.0 547.7L1078.0 545.3L1080.0 547.7L1082.0 545.3L1084.0 547.7L1086.0 545.3L1088.0 547.7L1090.0 545.3L1092.0 547.7L1094.0 545.3L1096.0 547.7L1098.0 545.3L1100.0 547.7L1102.0 545.3L1104.0 547.7L1106.0 545.3L1108.0 547.7 M383.0 585.3L385.0 587.7L387.0 585.3L389.0 587.7L391.0 585.3L393.0 587.7L395.0 585.3L397.0 587.7L399.0 585.3L401.0 587.7L403.0 585.3L405.0 587.7L407.0 585.3L409.0 587.7L411.0 585.3L413.0 587.7L415.0 585.3L417.0 587.7L419.0 585.3L421.0 587.7L423.0 585.3L425.0 587.7L427.0 585.3L429.0 587.7L431.0 585.3L433.0 587.7L435.0 585.3L437.0 587.7L439.0 585.3L441.0 587.7L443.0 585.3L445.0 587.7L447.0 585.3L449.0 587.7L451.0 585.3L453.0 587.7L455.0 585.3L457.0 587.7L459.0 585.3L461.0 587.7L463.0 585.3L465.0 587.7L467.0 585.3L469.0 587.7L471.0 585.3L473.0 587.7L475.0 585.3L477.0 587.7L479.0 585.3L481.0 587.7L483.0 585.3L485.0 587.7L487.0 585.3L489.0 587.7L491.0 585.3L493.0 587.7L495.0 585.3L497.0 587.7L499.0 585.3L501.0 587.7L503.0 585.3L505.0 587.7L507.0 585.3L509.0 587.7L511.0 585.3 M528.0 585.3L530.0 587.7L532.0 585.3L534.0 587.7L536.0 585.3L538.0 587.7L540.0 585.3L542.0 587.7L544.0 585.3L546.0 587.7L548.0 585.3L550.0 587.7L552.0 585.3L554.0 587.7L556.0 585.3L558.0 587.7L560.0 585.3L562.0 587.7L564.0 585.3L566.0 587.7L568.0 585.3L570.0 587.7L572.0 585.3L574.0 587.7L576.0 585.3L578.0 587.7L580.0 585.3L582.0 587.7L584.0 585.3L586.0 587.7L588.0 585.3L590.0 587.7L592.0 585.3L594.0 587.7L596.0 585.3L598.0 587.7L600.0 585.3L602.0 587.7L604.0 585.3L606.0 587.7L608.0 585.3L610.0 587.7L612.0 585.3L614.0 587.7L616.0 585.3L618.0 587.7L620.0 585.3L622.0 587.7L624.0 585.3L626.0 587.7L628.0 585.3L630.0 587.7L632.0 585.3L634.0 587.7L636.0 585.3L638.0 587.7L640.0 585.3L642.0 587.7L644.0 585.3L646.0 587.7L648.0 585.3L650.0 587.7L652.0 585.3L654.0 587.7L656.0 585.3L658.0 587.7L660.0 585.3L662.0 587.7L664.0 585.3L666.0 587.7L668.0 585.3L670.0 587.7L672.0 585.3L674.0 587.7L676.0 585.3L678.0 587.7L680.0 585.3L682.0 587.7L684.0 585.3L686.0 587.7L688.0 585.3L690.0 587.7L692.0 585.3L694.0 587.7L696.0 585.3L698.0 587.7L700.0 585.3L702.0 587.7L704.0 585.3L706.0 587.7L708.0 585.3L710.0 587.7L712.0 585.3L714.0 587.7L716.0 585.3L718.0 587.7L720.0 585.3L722.0 587.7L724.0 585.3L726.0 587.7L728.0 585.3L730.0 587.7L732.0 585.3L734.0 587.7L736.0 585.3L738.0 587.7L740.0 585.3L742.0 587.7L744.0 585.3L746.0 587.7L748.0 585.3L750.0 587.7L752.0 585.3L754.0 587.7 M774.0 585.3L776.0 587.7L778.0 585.3L780.0 587.7L782.0 585.3L784.0 587.7L786.0 585.3L788.0 587.7L790.0 585.3L792.0 587.7L794.0 585.3L796.0 587.7L798.0 585.3L800.0 587.7L802.0 585.3L804.0 587.7L806.0 585.3L808.0 587.7L810.0 585.3L812.0 587.7L814.0 585.3L816.0 587.7L818.0 585.3L820.0 587.7L822.0 585.3L824.0 587.7L826.0 585.3L828.0 587.7L830.0 585.3L832.0 587.7L834.0 585.3L836.0 587.7L838.0 585.3L840.0 587.7L842.0 585.3L844.0 587.7L846.0 585.3L848.0 587.7L850.0 585.3L852.0 587.7L854.0 585.3L856.0 587.7L858.0 585.3L860.0 587.7L862.0 585.3L864.0 587.7L866.0 585.3L868.0 587.7L870.0 585.3 M383.0 626.3L385.0 628.7L387.0 626.3L389.0 628.7L391.0 626.3L393.0 628.7L395.0 626.3L397.0 628.7L399.0 626.3L401.0 628.7L403.0 626.3L405.0 628.7L407.0 626.3L409.0 628.7L411.0 626.3L413.0 628.7L415.0 626.3L417.0 628.7L419.0 626.3L421.0 628.7L423.0 626.3L425.0 628.7L427.0 626.3L429.0 628.7L431.0 626.3L433.0 628.7L435.0 626.3L437.0 628.7L439.0 626.3L441.0 628.7L443.0 626.3L445.0 628.7L447.0 626.3L449.0 628.7L451.0 626.3L453.0 628.7L455.0 626.3L457.0 628.7L459.0 626.3L461.0 628.7L463.0 626.3L465.0 628.7L467.0 626.3L469.0 628.7L471.0 626.3L473.0 628.7L475.0 626.3L477.0 628.7L479.0 626.3L481.0 628.7L483.0 626.3L485.0 628.7L487.0 626.3L489.0 628.7L491.0 626.3L493.0 628.7L495.0 626.3L497.0 628.7L499.0 626.3L501.0 628.7L503.0 626.3L505.0 628.7L507.0 626.3L509.0 628.7L511.0 626.3L513.0 628.7L515.0 626.3L517.0 628.7L519.0 626.3L521.0 628.7L523.0 626.3L525.0 628.7L527.0 626.3L529.0 628.7L531.0 626.3L533.0 628.7L535.0 626.3L537.0 628.7L539.0 626.3 M619.0 626.3L621.0 628.7L623.0 626.3L625.0 628.7L627.0 626.3L629.0 628.7L631.0 626.3L633.0 628.7L635.0 626.3L637.0 628.7L639.0 626.3L641.0 628.7L643.0 626.3L645.0 628.7L647.0 626.3L649.0 628.7L651.0 626.3L653.0 628.7L655.0 626.3L657.0 628.7L659.0 626.3L661.0 628.7L663.0 626.3L665.0 628.7L667.0 626.3L669.0 628.7L671.0 626.3L673.0 628.7L675.0 626.3L677.0 628.7L679.0 626.3L681.0 628.7L683.0 626.3L685.0 628.7L687.0 626.3L689.0 628.7L691.0 626.3L693.0 628.7L695.0 626.3L697.0 628.7L699.0 626.3L701.0 628.7L703.0 626.3L705.0 628.7L707.0 626.3L709.0 628.7L711.0 626.3L713.0 628.7L715.0 626.3L717.0 628.7L719.0 626.3L721.0 628.7L723.0 626.3L725.0 628.7L727.0 626.3L729.0 628.7L731.0 626.3L733.0 628.7L735.0 626.3L737.0 628.7L739.0 626.3L741.0 628.7L743.0 626.3L745.0 628.7L747.0 626.3L749.0 628.7L751.0 626.3L753.0 628.7L755.0 626.3L757.0 628.7L759.0 626.3L761.0 628.7L763.0 626.3L765.0 628.7L767.0 626.3L769.0 628.7L771.0 626.3L773.0 628.7L775.0 626.3L777.0 628.7L779.0 626.3 M858.0 626.3L860.0 628.7L862.0 626.3L864.0 628.7L866.0 626.3L868.0 628.7L870.0 626.3L872.0 628.7L874.0 626.3L876.0 628.7L878.0 626.3L880.0 628.7L882.0 626.3L884.0 628.7L886.0 626.3L888.0 628.7L890.0 626.3L892.0 628.7L894.0 626.3L896.0 628.7L898.0 626.3L900.0 628.7L902.0 626.3L904.0 628.7L906.0 626.3L908.0 628.7L910.0 626.3L912.0 628.7L914.0 626.3L916.0 628.7L918.0 626.3L920.0 628.7L922.0 626.3L924.0 628.7L926.0 626.3L928.0 628.7 M1008.0 626.3L1010.0 628.7L1012.0 626.3L1014.0 628.7L1016.0 626.3L1018.0 628.7L1020.0 626.3L1022.0 628.7L1024.0 626.3L1026.0 628.7L1028.0 626.3L1030.0 628.7L1032.0 626.3L1034.0 628.7L1036.0 626.3L1038.0 628.7L1040.0 626.3L1042.0 628.7L1044.0 626.3L1046.0 628.7L1048.0 626.3L1050.0 628.7L1052.0 626.3L1054.0 628.7L1056.0 626.3L1058.0 628.7L1060.0 626.3L1062.0 628.7L1064.0 626.3L1066.0 628.7L1068.0 626.3L1070.0 628.7L1072.0 626.3L1074.0 628.7L1076.0 626.3L1078.0 628.7L1080.0 626.3L1082.0 628.7L1084.0 626.3L1086.0 628.7L1088.0 626.3L1090.0 628.7L1092.0 626.3L1094.0 628.7L1096.0 626.3L1098.0 628.7L1100.0 626.3L1102.0 628.7L1104.0 626.3L1106.0 628.7L1108.0 626.3L1110.0 628.7L1112.0 626.3L1114.0 628.7L1116.0 626.3L1118.0 628.7 M383.0 665.3L385.0 667.7L387.0 665.3L389.0 667.7L391.0 665.3L393.0 667.7L395.0 665.3L397.0 667.7L399.0 665.3L401.0 667.7L403.0 665.3L405.0 667.7L407.0 665.3L409.0 667.7L411.0 665.3L413.0 667.7L415.0 665.3L417.0 667.7L419.0 665.3L421.0 667.7L423.0 665.3L425.0 667.7L427.0 665.3L429.0 667.7L431.0 665.3L433.0 667.7L435.0 665.3L437.0 667.7L439.0 665.3L441.0 667.7L443.0 665.3L445.0 667.7L447.0 665.3L449.0 667.7L451.0 665.3L453.0 667.7L455.0 665.3L457.0 667.7L459.0 665.3L461.0 667.7L463.0 665.3L465.0 667.7L467.0 665.3L469.0 667.7L471.0 665.3L473.0 667.7L475.0 665.3L477.0 667.7L479.0 665.3L481.0 667.7L483.0 665.3L485.0 667.7L487.0 665.3L489.0 667.7L491.0 665.3L493.0 667.7L495.0 665.3L497.0 667.7L499.0 665.3L501.0 667.7L503.0 665.3L505.0 667.7L507.0 665.3L509.0 667.7L511.0 665.3L513.0 667.7L515.0 665.3L517.0 667.7L519.0 665.3L521.0 667.7L523.0 665.3L525.0 667.7L527.0 665.3L529.0 667.7L531.0 665.3L533.0 667.7L535.0 665.3L537.0 667.7L539.0 665.3L541.0 667.7L543.0 665.3L545.0 667.7L547.0 665.3L549.0 667.7L551.0 665.3L553.0 667.7L555.0 665.3L557.0 667.7L559.0 665.3L561.0 667.7L563.0 665.3L565.0 667.7L567.0 665.3L569.0 667.7L571.0 665.3L573.0 667.7L575.0 665.3L577.0 667.7L579.0 665.3L581.0 667.7L583.0 665.3L585.0 667.7L587.0 665.3L589.0 667.7 M598.0 665.3L600.0 667.7L602.0 665.3L604.0 667.7L606.0 665.3L608.0 667.7L610.0 665.3L612.0 667.7L614.0 665.3L616.0 667.7L618.0 665.3L620.0 667.7L622.0 665.3L624.0 667.7L626.0 665.3L628.0 667.7L630.0 665.3L632.0 667.7L634.0 665.3L636.0 667.7L638.0 665.3L640.0 667.7L642.0 665.3L644.0 667.7L646.0 665.3L648.0 667.7L650.0 665.3L652.0 667.7L654.0 665.3L656.0 667.7L658.0 665.3L660.0 667.7L662.0 665.3L664.0 667.7L666.0 665.3L668.0 667.7L670.0 665.3L672.0 667.7L674.0 665.3L676.0 667.7L678.0 665.3L680.0 667.7L682.0 665.3L684.0 667.7L686.0 665.3L688.0 667.7L690.0 665.3L692.0 667.7L694.0 665.3L696.0 667.7L698.0 665.3L700.0 667.7L702.0 665.3L704.0 667.7L706.0 665.3L708.0 667.7L710.0 665.3L712.0 667.7 M1156.0 505.3L1158.0 507.7L1160.0 505.3L1162.0 507.7L1164.0 505.3L1166.0 507.7L1168.0 505.3L1170.0 507.7L1172.0 505.3L1174.0 507.7L1176.0 505.3L1178.0 507.7L1180.0 505.3L1182.0 507.7L1184.0 505.3L1186.0 507.7L1188.0 505.3L1190.0 507.7L1192.0 505.3L1194.0 507.7L1196.0 505.3L1198.0 507.7L1200.0 505.3L1202.0 507.7L1204.0 505.3L1206.0 507.7L1208.0 505.3L1210.0 507.7L1212.0 505.3L1214.0 507.7L1216.0 505.3L1218.0 507.7L1220.0 505.3L1222.0 507.7L1224.0 505.3L1226.0 507.7L1228.0 505.3L1230.0 507.7L1232.0 505.3L1234.0 507.7L1236.0 505.3L1238.0 507.7L1240.0 505.3L1242.0 507.7L1244.0 505.3L1246.0 507.7L1248.0 505.3L1250.0 507.7L1252.0 505.3L1254.0 507.7L1256.0 505.3L1258.0 507.7L1260.0 505.3L1262.0 507.7L1264.0 505.3L1266.0 507.7L1268.0 505.3L1270.0 507.7L1272.0 505.3L1274.0 507.7L1276.0 505.3L1278.0 507.7L1280.0 505.3L1282.0 507.7L1284.0 505.3L1286.0 507.7L1288.0 505.3L1290.0 507.7L1292.0 505.3L1294.0 507.7L1296.0 505.3 M323.0 704.3L325.0 706.7L327.0 704.3L329.0 706.7L331.0 704.3L333.0 706.7L335.0 704.3L337.0 706.7L339.0 704.3L341.0 706.7L343.0 704.3L345.0 706.7L347.0 704.3L349.0 706.7L351.0 704.3L353.0 706.7L355.0 704.3L357.0 706.7L359.0 704.3L361.0 706.7L363.0 704.3L365.0 706.7L367.0 704.3L369.0 706.7L371.0 704.3L373.0 706.7L375.0 704.3L377.0 706.7L379.0 704.3L381.0 706.7L383.0 704.3L385.0 706.7L387.0 704.3L389.0 706.7L391.0 704.3L393.0 706.7L395.0 704.3L397.0 706.7L399.0 704.3L401.0 706.7L403.0 704.3L405.0 706.7L407.0 704.3L409.0 706.7L411.0 704.3L413.0 706.7L415.0 704.3L417.0 706.7L419.0 704.3L421.0 706.7L423.0 704.3L425.0 706.7L427.0 704.3L429.0 706.7L431.0 704.3L433.0 706.7L435.0 704.3L437.0 706.7L439.0 704.3L441.0 706.7L443.0 704.3L445.0 706.7L447.0 704.3 M457.0 704.3L459.0 706.7L461.0 704.3L463.0 706.7L465.0 704.3L467.0 706.7L469.0 704.3L471.0 706.7L473.0 704.3L475.0 706.7L477.0 704.3L479.0 706.7L481.0 704.3L483.0 706.7L485.0 704.3L487.0 706.7L489.0 704.3L491.0 706.7L493.0 704.3L495.0 706.7L497.0 704.3L499.0 706.7L501.0 704.3L503.0 706.7L505.0 704.3L507.0 706.7L509.0 704.3L511.0 706.7L513.0 704.3L515.0 706.7L517.0 704.3L519.0 706.7L521.0 704.3L523.0 706.7L525.0 704.3L527.0 706.7L529.0 704.3L531.0 706.7L533.0 704.3L535.0 706.7L537.0 704.3L539.0 706.7L541.0 704.3L543.0 706.7L545.0 704.3L547.0 706.7L549.0 704.3L551.0 706.7L553.0 704.3L555.0 706.7L557.0 704.3L559.0 706.7L561.0 704.3L563.0 706.7L565.0 704.3L567.0 706.7L569.0 704.3 M578.0 704.3L580.0 706.7L582.0 704.3L584.0 706.7L586.0 704.3L588.0 706.7L590.0 704.3L592.0 706.7L594.0 704.3L596.0 706.7L598.0 704.3L600.0 706.7L602.0 704.3L604.0 706.7L606.0 704.3L608.0 706.7L610.0 704.3L612.0 706.7L614.0 704.3L616.0 706.7L618.0 704.3L620.0 706.7L622.0 704.3L624.0 706.7L626.0 704.3L628.0 706.7L630.0 704.3L632.0 706.7L634.0 704.3L636.0 706.7L638.0 704.3L640.0 706.7L642.0 704.3L644.0 706.7L646.0 704.3L648.0 706.7L650.0 704.3L652.0 706.7L654.0 704.3L656.0 706.7L658.0 704.3L660.0 706.7L662.0 704.3L664.0 706.7L666.0 704.3L668.0 706.7 M383.0 745.3L385.0 747.7L387.0 745.3L389.0 747.7L391.0 745.3L393.0 747.7L395.0 745.3L397.0 747.7L399.0 745.3L401.0 747.7L403.0 745.3L405.0 747.7L407.0 745.3L409.0 747.7L411.0 745.3L413.0 747.7L415.0 745.3L417.0 747.7L419.0 745.3L421.0 747.7L423.0 745.3L425.0 747.7L427.0 745.3L429.0 747.7L431.0 745.3L433.0 747.7L435.0 745.3L437.0 747.7L439.0 745.3L441.0 747.7L443.0 745.3L445.0 747.7L447.0 745.3L449.0 747.7L451.0 745.3L453.0 747.7L455.0 745.3L457.0 747.7L459.0 745.3L461.0 747.7L463.0 745.3L465.0 747.7L467.0 745.3L469.0 747.7L471.0 745.3L473.0 747.7L475.0 745.3L477.0 747.7L479.0 745.3L481.0 747.7L483.0 745.3L485.0 747.7L487.0 745.3L489.0 747.7L491.0 745.3L493.0 747.7L495.0 745.3L497.0 747.7L499.0 745.3L501.0 747.7L503.0 745.3L505.0 747.7 M514.0 745.3L516.0 747.7L518.0 745.3L520.0 747.7L522.0 745.3L524.0 747.7L526.0 745.3L528.0 747.7L530.0 745.3L532.0 747.7L534.0 745.3L536.0 747.7L538.0 745.3L540.0 747.7L542.0 745.3L544.0 747.7L546.0 745.3L548.0 747.7L550.0 745.3L552.0 747.7L554.0 745.3L556.0 747.7L558.0 745.3L560.0 747.7L562.0 745.3L564.0 747.7L566.0 745.3L568.0 747.7L570.0 745.3L572.0 747.7L574.0 745.3L576.0 747.7L578.0 745.3L580.0 747.7L582.0 745.3L584.0 747.7L586.0 745.3L588.0 747.7L590.0 745.3L592.0 747.7L594.0 745.3L596.0 747.7L598.0 745.3L600.0 747.7L602.0 745.3L604.0 747.7L606.0 745.3L608.0 747.7L610.0 745.3L612.0 747.7L614.0 745.3L616.0 747.7L618.0 745.3L620.0 747.7L622.0 745.3L624.0 747.7L626.0 745.3L628.0 747.7L630.0 745.3L632.0 747.7L634.0 745.3L636.0 747.7L638.0 745.3L640.0 747.7L642.0 745.3L644.0 747.7L646.0 745.3L648.0 747.7L650.0 745.3L652.0 747.7L654.0 745.3L656.0 747.7L658.0 745.3L660.0 747.7L662.0 745.3L664.0 747.7L666.0 745.3L668.0 747.7L670.0 745.3L672.0 747.7L674.0 745.3L676.0 747.7L678.0 745.3L680.0 747.7L682.0 745.3L684.0 747.7L686.0 745.3L688.0 747.7L690.0 745.3L692.0 747.7L694.0 745.3L696.0 747.7L698.0 745.3L700.0 747.7 M710.0 745.3L712.0 747.7L714.0 745.3L716.0 747.7L718.0 745.3L720.0 747.7L722.0 745.3L724.0 747.7L726.0 745.3L728.0 747.7L730.0 745.3L732.0 747.7L734.0 745.3L736.0 747.7L738.0 745.3L740.0 747.7L742.0 745.3L744.0 747.7L746.0 745.3L748.0 747.7L750.0 745.3L752.0 747.7L754.0 745.3L756.0 747.7L758.0 745.3L760.0 747.7L762.0 745.3L764.0 747.7L766.0 745.3L768.0 747.7L770.0 745.3L772.0 747.7L774.0 745.3L776.0 747.7L778.0 745.3L780.0 747.7L782.0 745.3L784.0 747.7L786.0 745.3L788.0 747.7L790.0 745.3L792.0 747.7L794.0 745.3L796.0 747.7L798.0 745.3L800.0 747.7L802.0 745.3L804.0 747.7L806.0 745.3L808.0 747.7L810.0 745.3L812.0 747.7L814.0 745.3L816.0 747.7L818.0 745.3L820.0 747.7L822.0 745.3L824.0 747.7L826.0 745.3L828.0 747.7L830.0 745.3L832.0 747.7L834.0 745.3L836.0 747.7L838.0 745.3L840.0 747.7L842.0 745.3L844.0 747.7L846.0 745.3L848.0 747.7L850.0 745.3L852.0 747.7L854.0 745.3L856.0 747.7L858.0 745.3 M867.0 745.3L869.0 747.7L871.0 745.3L873.0 747.7L875.0 745.3L877.0 747.7L879.0 745.3L881.0 747.7L883.0 745.3L885.0 747.7L887.0 745.3L889.0 747.7L891.0 745.3L893.0 747.7L895.0 745.3L897.0 747.7L899.0 745.3L901.0 747.7L903.0 745.3L905.0 747.7L907.0 745.3L909.0 747.7L911.0 745.3L913.0 747.7L915.0 745.3L917.0 747.7L919.0 745.3L921.0 747.7L923.0 745.3L925.0 747.7L927.0 745.3L929.0 747.7L931.0 745.3L933.0 747.7L935.0 745.3L937.0 747.7L939.0 745.3L941.0 747.7L943.0 745.3L945.0 747.7L947.0 745.3L949.0 747.7L951.0 745.3L953.0 747.7L955.0 745.3L957.0 747.7L959.0 745.3L961.0 747.7L963.0 745.3L965.0 747.7L967.0 745.3L969.0 747.7L971.0 745.3L973.0 747.7L975.0 745.3L977.0 747.7L979.0 745.3L981.0 747.7L983.0 745.3L985.0 747.7L987.0 745.3L989.0 747.7L991.0 745.3L993.0 747.7L995.0 745.3L997.0 747.7 M323.0 784.3L325.0 786.7L327.0 784.3L329.0 786.7L331.0 784.3L333.0 786.7L335.0 784.3L337.0 786.7L339.0 784.3L341.0 786.7L343.0 784.3L345.0 786.7L347.0 784.3L349.0 786.7L351.0 784.3L353.0 786.7L355.0 784.3L357.0 786.7L359.0 784.3L361.0 786.7L363.0 784.3L365.0 786.7L367.0 784.3L369.0 786.7L371.0 784.3L373.0 786.7L375.0 784.3L377.0 786.7L379.0 784.3L381.0 786.7L383.0 784.3L385.0 786.7L387.0 784.3L389.0 786.7L391.0 784.3L393.0 786.7L395.0 784.3L397.0 786.7L399.0 784.3L401.0 786.7L403.0 784.3L405.0 786.7L407.0 784.3L409.0 786.7L411.0 784.3L413.0 786.7L415.0 784.3L417.0 786.7L419.0 784.3L421.0 786.7L423.0 784.3L425.0 786.7L427.0 784.3L429.0 786.7L431.0 784.3L433.0 786.7L435.0 784.3L437.0 786.7L439.0 784.3L441.0 786.7L443.0 784.3L445.0 786.7L447.0 784.3L449.0 786.7L451.0 784.3L453.0 786.7L455.0 784.3L457.0 786.7L459.0 784.3L461.0 786.7L463.0 784.3L465.0 786.7L467.0 784.3L469.0 786.7L471.0 784.3L473.0 786.7L475.0 784.3L477.0 786.7L479.0 784.3L481.0 786.7L483.0 784.3L485.0 786.7L487.0 784.3L489.0 786.7L491.0 784.3L493.0 786.7L495.0 784.3L497.0 786.7L499.0 784.3L501.0 786.7L503.0 784.3L505.0 786.7L507.0 784.3L509.0 786.7L511.0 784.3L513.0 786.7L515.0 784.3L517.0 786.7L519.0 784.3L521.0 786.7L523.0 784.3L525.0 786.7L527.0 784.3L529.0 786.7L531.0 784.3L533.0 786.7L535.0 784.3L537.0 786.7L539.0 784.3L541.0 786.7L543.0 784.3L545.0 786.7L547.0 784.3L549.0 786.7L551.0 784.3L553.0 786.7L555.0 784.3L557.0 786.7L559.0 784.3L561.0 786.7L563.0 784.3L565.0 786.7L567.0 784.3L569.0 786.7L571.0 784.3L573.0 786.7 M631.0 784.3L633.0 786.7L635.0 784.3L637.0 786.7L639.0 784.3L641.0 786.7L643.0 784.3L645.0 786.7L647.0 784.3L649.0 786.7L651.0 784.3L653.0 786.7L655.0 784.3L657.0 786.7L659.0 784.3L661.0 786.7L663.0 784.3L665.0 786.7L667.0 784.3L669.0 786.7L671.0 784.3L673.0 786.7L675.0 784.3L677.0 786.7L679.0 784.3L681.0 786.7L683.0 784.3L685.0 786.7L687.0 784.3L689.0 786.7L691.0 784.3L693.0 786.7L695.0 784.3L697.0 786.7L699.0 784.3L701.0 786.7L703.0 784.3L705.0 786.7L707.0 784.3L709.0 786.7L711.0 784.3L713.0 786.7L715.0 784.3L717.0 786.7L719.0 784.3L721.0 786.7L723.0 784.3L725.0 786.7L727.0 784.3L729.0 786.7L731.0 784.3L733.0 786.7L735.0 784.3L737.0 786.7L739.0 784.3L741.0 786.7L743.0 784.3L745.0 786.7L747.0 784.3L749.0 786.7L751.0 784.3L753.0 786.7L755.0 784.3L757.0 786.7L759.0 784.3L761.0 786.7L763.0 784.3L765.0 786.7L767.0 784.3L769.0 786.7L771.0 784.3L773.0 786.7L775.0 784.3L777.0 786.7L779.0 784.3L781.0 786.7L783.0 784.3L785.0 786.7L787.0 784.3L789.0 786.7L791.0 784.3L793.0 786.7L795.0 784.3L797.0 786.7L799.0 784.3L801.0 786.7L803.0 784.3L805.0 786.7L807.0 784.3L809.0 786.7L811.0 784.3L813.0 786.7L815.0 784.3L817.0 786.7L819.0 784.3L821.0 786.7L823.0 784.3L825.0 786.7L827.0 784.3L829.0 786.7L831.0 784.3L833.0 786.7L835.0 784.3L837.0 786.7L839.0 784.3L841.0 786.7L843.0 784.3L845.0 786.7L847.0 784.3L849.0 786.7L851.0 784.3L853.0 786.7L855.0 784.3L857.0 786.7L859.0 784.3L861.0 786.7L863.0 784.3L865.0 786.7L867.0 784.3L869.0 786.7L871.0 784.3L873.0 786.7L875.0 784.3 M961.0 784.3L963.0 786.7L965.0 784.3L967.0 786.7L969.0 784.3L971.0 786.7L973.0 784.3L975.0 786.7L977.0 784.3L979.0 786.7L981.0 784.3L983.0 786.7L985.0 784.3L987.0 786.7L989.0 784.3L991.0 786.7L993.0 784.3L995.0 786.7L997.0 784.3L999.0 786.7L1001.0 784.3L1003.0 786.7L1005.0 784.3L1007.0 786.7L1009.0 784.3L1011.0 786.7L1013.0 784.3L1015.0 786.7L1017.0 784.3L1019.0 786.7L1021.0 784.3L1023.0 786.7L1025.0 784.3L1027.0 786.7L1029.0 784.3L1031.0 786.7L1033.0 784.3L1035.0 786.7L1037.0 784.3L1039.0 786.7L1041.0 784.3L1043.0 786.7L1045.0 784.3L1047.0 786.7L1049.0 784.3L1051.0 786.7L1053.0 784.3L1055.0 786.7L1057.0 784.3L1059.0 786.7L1061.0 784.3L1063.0 786.7L1065.0 784.3L1067.0 786.7L1069.0 784.3L1071.0 786.7L1073.0 784.3L1075.0 786.7L1077.0 784.3L1079.0 786.7L1081.0 784.3L1083.0 786.7L1085.0 784.3L1087.0 786.7L1089.0 784.3L1091.0 786.7L1093.0 784.3L1095.0 786.7L1097.0 784.3L1099.0 786.7L1101.0 784.3L1103.0 786.7L1105.0 784.3L1107.0 786.7L1109.0 784.3L1111.0 786.7L1113.0 784.3L1115.0 786.7L1117.0 784.3 M1156.0 704.3L1158.0 706.7L1160.0 704.3L1162.0 706.7L1164.0 704.3L1166.0 706.7L1168.0 704.3L1170.0 706.7L1172.0 704.3L1174.0 706.7L1176.0 704.3L1178.0 706.7L1180.0 704.3L1182.0 706.7L1184.0 704.3L1186.0 706.7L1188.0 704.3L1190.0 706.7L1192.0 704.3L1194.0 706.7L1196.0 704.3L1198.0 706.7L1200.0 704.3L1202.0 706.7L1204.0 704.3L1206.0 706.7L1208.0 704.3L1210.0 706.7L1212.0 704.3L1214.0 706.7L1216.0 704.3L1218.0 706.7L1220.0 704.3L1222.0 706.7L1224.0 704.3L1226.0 706.7L1228.0 704.3L1230.0 706.7L1232.0 704.3L1234.0 706.7L1236.0 704.3L1238.0 706.7L1240.0 704.3L1242.0 706.7L1244.0 704.3L1246.0 706.7L1248.0 704.3L1250.0 706.7L1252.0 704.3L1254.0 706.7L1256.0 704.3L1258.0 706.7L1260.0 704.3L1262.0 706.7L1264.0 704.3L1266.0 706.7L1268.0 704.3L1270.0 706.7L1272.0 704.3L1274.0 706.7L1276.0 704.3L1278.0 706.7L1280.0 704.3L1282.0 706.7L1284.0 704.3L1286.0 706.7L1288.0 704.3L1290.0 706.7L1292.0 704.3L1294.0 706.7L1296.0 704.3"/></svg>
<!--/ZZ-->
</body></html>
